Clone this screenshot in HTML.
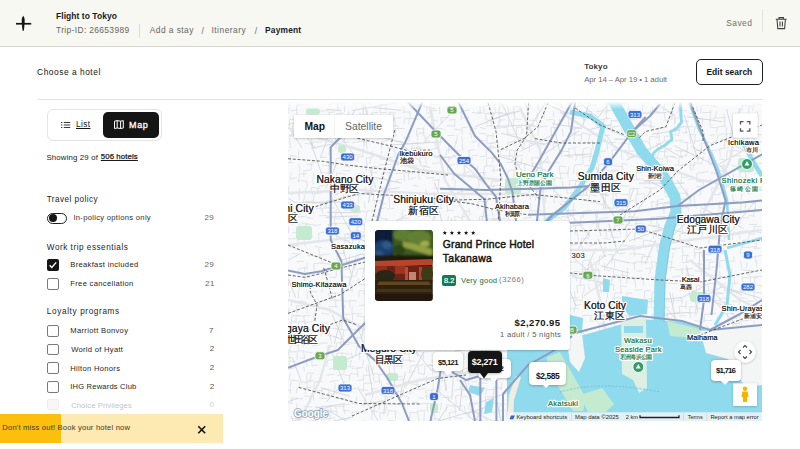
<!DOCTYPE html>
<html><head><meta charset="utf-8">
<style>
*{margin:0;padding:0;box-sizing:border-box}
html,body{width:800px;height:449px;overflow:hidden;background:#fff;font-family:"Liberation Sans",sans-serif;color:#111}
.t{position:absolute;white-space:nowrap;line-height:1}
.b{position:absolute}
</style></head><body>
<div class="b" style="left:0px;top:0px;width:800px;height:46px;background:#f8f8f3"></div>
<div class="b" style="left:0px;top:46px;width:800px;height:1px;background:#d6d6cf"></div>
<svg class="b" style="left:14px;top:14px" width="20" height="20" viewBox="14 14 20 20">
<rect x="16" y="22.9" width="15.2" height="1.7" fill="#151515"/>
<path d="M23.2 15.8 C24.7 17.4 24.9 20 24.6 23 L24.3 27 L23.8 30.8 L22.6 30.8 L22.1 27 L21.8 23 C21.5 20 21.7 17.4 23.2 15.8Z" fill="#151515"/>
</svg>
<div class="t" id="h1" style="left:56.05px;top:12.05px;font-size:8.5px;color:#1a1a1a;font-weight:bold;letter-spacing:0.038px">Flight to Tokyo</div>
<div class="t" id="h2" style="left:56.05px;top:25.58px;font-size:8.4px;color:#66665f;letter-spacing:0.365px">Trip-ID: 26653989</div>
<div class="b" style="left:139px;top:24px;width:1px;height:14px;background:#dcdcd5"></div>
<div class="t" id="h3" style="left:149.78px;top:26.00px;font-size:8.4px;color:#66665f;letter-spacing:0.450px">Add a stay</div>
<div class="t" id="h4" style="left:201.56px;top:26.56px;font-size:8.4px;color:#66665f">/</div>
<div class="t" id="h5" style="left:211.44px;top:26.00px;font-size:8.4px;color:#66665f;letter-spacing:0.508px">Itinerary</div>
<div class="t" id="h6" style="left:254.73px;top:26.56px;font-size:8.4px;color:#66665f">/</div>
<div class="t" id="h7" style="left:265.00px;top:26.00px;font-size:8.4px;color:#1a1a1a;font-weight:bold;letter-spacing:0.195px">Payment</div>
<div class="t" id="h8" style="left:726.27px;top:18.87px;font-size:8.4px;color:#6f6f68;letter-spacing:0.450px">Saved</div>
<div class="b" style="left:762px;top:9px;width:1px;height:23px;background:#e4e4dd"></div>
<svg class="b" style="left:774px;top:15px" width="15" height="16" viewBox="774 15 15 16">
<path d="M775.8 19.3H786.6M779 19V17.6H783.4V19M777 19.5L777.8 28.6H784.6L785.4 19.5M780 21.5V26.5M782.4 21.5V26.5" fill="none" stroke="#3d3d3d" stroke-width="1.05"/>
</svg>
<div class="t" id="s1" style="left:37.08px;top:68.42px;font-size:8.4px;color:#141414;letter-spacing:0.526px">Choose a hotel</div>
<div class="t" id="s2" style="left:584.22px;top:62.90px;font-size:8px;color:#141414;letter-spacing:0.562px;-webkit-text-stroke:0.2px #141414">Tokyo</div>
<div class="t" id="s3" style="left:584.22px;top:75.69px;font-size:7.8px;color:#6d6d6d;letter-spacing:-0.080px">Apr 14 – Apr 19 • 1 adult</div>
<div class="b" style="left:696px;top:59px;width:67px;height:26px;border:1px solid #1e1e1e;border-radius:5px"></div>
<div class="t" id="s4" style="left:706.44px;top:67.59px;font-size:8.4px;color:#141414;font-weight:bold;letter-spacing:0.063px">Edit search</div>
<div class="b" style="left:38px;top:99px;width:725px;height:1px;background:#e2e2e2"></div>
<div class="b" style="left:47px;top:109px;width:115px;height:32px;border:1px solid #e4e4e4;border-radius:6px"></div>
<div class="b" style="left:103px;top:112px;width:56px;height:26px;background:#151515;border-radius:5px"></div>
<svg class="b" style="left:60px;top:119px" width="12" height="10" viewBox="60 119 12 10">
<path d="M61 122.5h1.3M61 125h1.3M61 127.5h1.3M63.8 122.5h6.4M63.8 125h6.4M63.8 127.5h6.4" stroke="#151515" stroke-width="0.85" fill="none"/>
</svg>
<div class="t" id="l1" style="left:76.03px;top:120.36px;font-size:8.3px;color:#151515;letter-spacing:0.375px;text-decoration:underline;text-underline-offset:1px">List</div>
<svg class="b" style="left:113px;top:118px" width="13" height="12" viewBox="113 118 13 12">
<path d="M114.5 121.2L117.2 120.6L120.6 121.2L123.3 120.6V128L120.6 128.5L117.2 128L114.5 128.5Z M117.2 120.6V128 M120.6 121.2V128.5" stroke="#fff" stroke-width="1" fill="none" stroke-linejoin="round"/>
</svg>
<div class="t" id="l2" style="left:129.07px;top:121.20px;font-size:9px;color:#ffffff;letter-spacing:0.639px;-webkit-text-stroke:0.3px #fff">Map</div>
<div class="t" id="l3" style="left:46.47px;top:153.80px;font-size:7.8px;color:#1a1a1a;letter-spacing:0.165px">Showing 29 of</div>
<div class="t" id="l4" style="left:100.74px;top:152.99px;font-size:7.8px;color:#1a1a1a;letter-spacing:0.110px;text-decoration:underline;text-underline-offset:1px;-webkit-text-stroke:0.25px #1a1a1a">506 hotels</div>
<div class="t" id="f1" style="left:46.66px;top:195.95px;font-size:8.2px;color:#1e1e1e;letter-spacing:0.435px">Travel policy</div>
<div class="b" style="left:47px;top:212.5px;width:20px;height:11.0px;border:1px solid #1e1e1e;border-radius:6px"></div>
<div class="b" style="left:48.5px;top:214px;width:8.0px;height:8px;background:#151515;border-radius:50%"></div>
<div class="t" id="f2" style="left:73.39px;top:214.22px;font-size:7.7px;color:#333;letter-spacing:0.264px">In-policy options only</div>
<div class="t" id="f3" style="left:204.61px;top:214.29px;font-size:8px;color:#666;letter-spacing:0.090px">29</div>
<div class="t" id="f4" style="left:46.83px;top:243.68px;font-size:8.2px;color:#1e1e1e;letter-spacing:0.512px">Work trip essentials</div>
<div class="b" style="left:47px;top:259px;width:11.5px;height:12px;background:#151515;border-radius:2px"></div>
<svg class="b" style="left:47px;top:259px" width="12" height="12" viewBox="47 259 12 12">
<path d="M49.6 265.2L51.8 267.4L56.2 262.4" stroke="#fff" stroke-width="1.4" fill="none"/></svg>
<div class="t" id="f5" style="left:70.27px;top:261.23px;font-size:7.6px;color:#222;letter-spacing:0.318px">Breakfast included</div>
<div class="t" id="f6" style="left:204.61px;top:261.30px;font-size:8px;color:#666;letter-spacing:0.090px">29</div>
<div class="b" style="left:47px;top:278.3px;width:11.5px;height:11.699999999999989px;border:1px solid #7a7a7a;border-radius:2px"></div>
<div class="t" id="f7" style="left:70.27px;top:280.38px;font-size:7.6px;color:#222;letter-spacing:0.326px">Free cancellation</div>
<div class="t" id="f8" style="left:205.05px;top:280.30px;font-size:8px;color:#666;letter-spacing:0.450px">21</div>
<div class="t" id="f9" style="left:46.83px;top:308.16px;font-size:8.2px;color:#1e1e1e;letter-spacing:0.636px">Loyalty programs</div>
<div class="b" style="left:47px;top:325.1px;width:11.5px;height:11.800000000000011px;border:1px solid #7a7a7a;border-radius:2px"></div>
<div class="t" id="ly7Mar" style="left:70.27px;top:327.10px;font-size:7.6px;color:#1e1e1e;letter-spacing:0.321px">Marriott Bonvoy</div>
<div class="t" id="lnMar" style="left:208.88px;top:327.11px;font-size:8px;color:#555">7</div>
<div class="b" style="left:47px;top:343.6px;width:11.5px;height:11.800000000000011px;border:1px solid #7a7a7a;border-radius:2px"></div>
<div class="t" id="ly2Wor" style="left:71.17px;top:345.57px;font-size:7.6px;color:#1e1e1e;letter-spacing:0.295px">World of Hyatt</div>
<div class="t" id="lnWor" style="left:209.78px;top:345.32px;font-size:8px;color:#555">2</div>
<div class="b" style="left:47px;top:362.3px;width:11.5px;height:11.800000000000011px;border:1px solid #7a7a7a;border-radius:2px"></div>
<div class="t" id="ly2Hil" style="left:70.27px;top:364.58px;font-size:7.6px;color:#1e1e1e;letter-spacing:0.309px">Hilton Honors</div>
<div class="t" id="lnHil" style="left:209.78px;top:364.33px;font-size:8px;color:#555">2</div>
<div class="b" style="left:47px;top:380.90000000000003px;width:11.5px;height:11.800000000000011px;border:1px solid #7a7a7a;border-radius:2px"></div>
<div class="t" id="ly2IHG" style="left:70.27px;top:383.32px;font-size:7.6px;color:#1e1e1e;letter-spacing:0.180px">IHG Rewards Club</div>
<div class="t" id="lnIHG" style="left:209.78px;top:382.99px;font-size:8px;color:#555">2</div>
<div class="b" style="left:47px;top:398.8px;width:11.5px;height:11.699999999999989px;border:1px solid #eee;border-radius:2px;background:#f7f7f7"></div>
<div class="t" id="fa" style="left:71.17px;top:401.86px;font-size:7.6px;color:#c4c4c4;letter-spacing:0.119px">Choice Privileges</div>
<div class="t" id="fb" style="left:209.50px;top:401.09px;font-size:8px;color:#d0d0d0">0</div>
<div class="b" style="left:0px;top:413.5px;width:223px;height:29.80000000000001px;background:#fde9b2"></div>
<div class="b" style="left:0px;top:413.5px;width:60.8px;height:29.80000000000001px;background:#fcbf0e"></div>
<div class="t" id="bn" style="left:2.30px;top:424.41px;font-size:7.6px;color:#3d3628;letter-spacing:0.200px">Don't miss out! Book your hotel now</div>
<svg class="b" style="left:196px;top:424px" width="12" height="12" viewBox="196 424 12 12">
<path d="M198.3 426.3L205.2 433.2M205.2 426.3L198.3 433.2" stroke="#111" stroke-width="1.6"/></svg>
<svg class="b" style="left:288px;top:102px" width="474" height="319" viewBox="288 102 474 319">
<rect x="288" y="102" width="474" height="319" fill="#f8f9fa"/>
<path d="M282.8 97.2l0.0 7.8M296.4 96.2l8.7 0.6M296.4 96.2l1.4 9.4M306.1 97.5l5.6 0.1M306.1 97.5l-0.9 6.5M311.1 96.9l8.9 0.1M320.5 97.6l6.6 1.5M329.4 97.8l6.4 -0.6M329.4 97.8l0.8 7.1M341.0 95.8l1.4 7.1M348.8 97.5l-1.2 6.8M359.9 98.0l6.5 -1.2M359.9 98.0l0.9 6.2M365.7 96.8l8.4 -1.1M371.5 96.7l6.6 1.4M379.7 98.5l7.1 1.1M386.4 99.0l6.5 0.8M386.4 99.0l-0.6 5.8M393.9 97.3l7.9 -0.4M393.9 97.3l1.4 7.4M403.3 98.5l6.1 1.2M425.2 95.4l9.4 -0.8M432.0 98.3l-1.0 8.4M448.5 96.1l-1.5 6.6M455.3 95.2l7.0 0.2M455.3 95.2l-0.4 9.1M469.1 95.1l9.1 0.6M476.1 97.5l8.4 -0.5M537.8 98.4l8.5 -1.4M545.4 95.9l0.3 9.2M552.0 95.0l8.2 -0.9M552.0 95.0l1.2 8.1M560.3 98.6l8.2 -0.9M560.3 98.6l0.9 9.2M569.5 96.5l-1.1 7.5M582.1 95.7l6.6 -0.9M582.1 95.7l0.4 7.5M589.8 98.4l-1.3 5.6M604.7 98.2l6.0 -0.1M604.7 98.2l1.0 6.4M611.6 95.2l0.4 8.1M621.7 98.8l-0.1 6.2M626.0 96.9l-0.7 6.9M642.6 98.2l1.3 8.4M667.3 96.9l0.7 8.8M673.6 97.9l9.1 1.4M680.6 98.2l9.1 1.1M680.6 98.2l-1.3 7.3M688.2 98.1l5.6 0.9M688.2 98.1l0.9 6.2M694.8 98.2l6.1 0.0M704.4 97.8l1.3 5.8M709.4 97.1l8.4 0.4M719.4 97.2l7.0 1.0M733.3 95.8l7.5 0.3M733.3 95.8l1.4 7.6M740.1 98.2l0.6 5.8M754.6 96.9l7.2 0.9M282.9 103.8l8.0 1.3M282.9 103.8l0.8 5.6M289.3 103.4l-0.4 8.0M296.4 105.4l7.5 -0.7M296.4 105.4l0.1 7.2M305.0 104.2l6.1 -0.9M329.6 103.8l9.2 -0.8M337.1 103.0l8.4 -0.7M337.1 103.0l1.0 7.2M344.2 103.0l8.2 -1.4M344.2 103.0l0.5 9.1M352.4 103.0l8.5 0.0M356.8 102.8l5.6 0.2M365.8 103.1l6.3 1.0M374.7 102.9l9.3 -0.1M379.8 104.4l7.2 0.3M379.8 104.4l0.6 8.9M386.7 104.3l-0.9 6.2M403.8 105.9l0.3 7.5M412.4 105.7l9.1 0.7M426.3 105.6l0.7 5.8M432.4 104.4l6.9 0.4M439.4 106.3l0.5 7.8M456.3 105.5l0.3 8.5M462.0 104.1l6.3 -0.4M462.0 104.1l-0.7 9.1M480.0 105.1l0.3 8.5M483.7 106.2l7.4 -1.0M483.7 106.2l0.3 5.7M494.8 104.2l7.9 -0.4M494.8 104.2l0.5 7.7M499.6 105.4l5.6 -0.8M499.6 105.4l-1.0 8.5M507.6 106.1l1.5 9.3M513.8 106.1l7.4 1.4M513.8 106.1l0.1 9.2M530.9 103.0l-0.9 5.7M538.1 103.0l8.2 -0.1M538.1 103.0l0.2 7.2M553.9 103.5l9.1 0.9M568.4 105.0l-0.8 9.4M577.2 106.0l5.7 -0.7M577.2 106.0l0.4 5.9M583.2 102.8l8.2 0.2M590.0 104.4l6.9 0.7M606.6 103.4l6.5 0.9M606.6 103.4l0.5 9.5M620.2 104.0l9.0 -1.3M620.2 104.0l0.2 7.4M628.7 103.7l-0.9 8.1M642.1 103.1l8.4 -0.4M642.1 103.1l0.6 7.8M652.2 106.3l0.9 6.7M664.5 103.9l7.0 -0.3M664.5 103.9l-0.9 7.8M679.2 105.5l-1.4 7.6M696.7 102.8l8.7 -1.2M696.7 102.8l0.7 9.1M701.3 105.0l8.5 0.4M701.3 105.0l-0.8 8.6M710.6 105.6l6.9 1.4M742.3 105.1l8.3 0.9M742.3 105.1l-0.2 6.1M749.0 106.5l6.2 -0.9M749.0 106.5l-0.6 9.4M753.7 103.7l8.1 0.8M753.7 103.7l-1.3 7.3M283.3 113.6l5.9 -0.9M283.3 113.6l-0.8 8.4M290.9 110.9l6.6 -1.0M297.2 112.2l-0.7 9.0M307.2 111.4l9.3 -0.1M307.2 111.4l-1.4 9.3M314.2 111.5l7.6 -0.7M321.1 111.0l7.4 -0.4M328.9 112.4l6.1 -0.5M328.9 112.4l1.1 7.6M336.0 114.0l7.6 -1.0M348.8 111.1l-0.1 7.4M359.8 112.3l0.9 7.2M367.2 110.4l0.1 7.6M371.6 113.3l6.7 -1.3M371.6 113.3l-0.1 8.4M379.9 112.7l7.1 -0.1M389.3 112.6l7.0 0.6M389.3 112.6l0.2 7.3M393.5 114.0l0.3 6.7M402.5 112.2l6.8 -0.3M409.5 110.8l1.3 7.8M418.9 111.3l-1.1 5.9M426.2 112.8l7.1 1.0M431.4 110.9l6.0 -0.3M431.4 110.9l1.3 7.2M447.5 111.3l5.6 -0.3M461.1 111.3l8.1 -1.2M461.1 111.3l0.0 8.7M471.8 112.4l8.6 1.2M477.4 112.0l8.4 1.5M486.4 113.3l9.3 0.4M486.4 113.3l-1.3 6.5M493.3 112.8l9.2 -0.4M493.3 112.8l-1.1 9.4M499.0 113.6l7.7 0.2M499.0 113.6l1.2 9.5M509.3 112.4l8.8 -0.6M514.5 112.3l0.1 5.8M537.5 112.4l-0.9 7.4M544.1 111.5l0.1 6.6M553.3 111.3l0.5 6.1M562.3 112.4l7.1 0.4M569.0 113.0l9.5 1.0M583.1 112.1l9.1 -0.5M583.1 112.1l0.7 9.1M591.4 112.4l0.3 5.8M596.5 111.8l7.1 -1.3M605.6 111.0l7.1 -0.8M605.6 111.0l1.2 9.4M613.7 113.5l8.7 -0.8M620.8 113.6l8.7 -1.1M629.8 110.0l6.7 -0.5M629.8 110.0l1.2 8.8M635.1 111.4l-1.4 9.1M650.4 110.8l9.2 1.2M650.4 110.8l1.0 6.9M664.3 112.5l9.0 -1.3M664.3 112.5l0.7 6.8M674.6 113.5l0.6 9.3M680.3 110.3l6.7 0.6M680.3 110.3l-1.0 6.4M688.7 113.2l8.1 1.2M702.1 112.6l9.4 -0.2M710.6 110.2l-0.7 8.7M716.3 111.1l-0.7 7.7M724.2 113.6l-0.1 8.5M732.5 113.7l6.2 0.2M757.3 110.7l0.3 6.4M289.4 119.5l7.8 -0.0M289.4 119.5l0.3 8.4M298.3 121.0l6.1 -1.4M298.3 121.0l-0.2 7.3M304.6 120.7l9.1 0.2M314.2 118.5l6.7 -1.4M314.2 118.5l0.4 7.6M319.6 119.9l8.8 -1.0M319.6 119.9l-1.0 8.3M329.3 120.6l7.1 -0.4M329.3 120.6l1.4 5.7M335.5 120.5l-0.1 8.5M341.2 118.5l-0.3 6.7M350.2 117.8l9.5 0.8M356.9 118.5l-0.1 9.2M371.2 119.1l-0.5 8.3M382.0 119.9l-0.3 8.9M387.5 120.6l6.9 -0.9M394.2 118.3l7.4 -0.6M394.2 118.3l1.5 8.2M404.5 118.3l5.8 0.6M404.5 118.3l-0.7 5.6M409.2 118.5l9.2 0.6M409.2 118.5l-0.4 6.1M427.1 117.6l7.0 -1.3M432.3 120.6l5.7 -0.3M432.3 120.6l-1.4 6.1M440.9 117.6l7.2 0.1M440.9 117.6l0.6 6.5M448.9 120.2l6.3 -0.7M455.1 119.0l-0.6 6.9M461.9 117.7l8.0 0.2M487.0 118.4l-0.2 7.1M491.2 119.0l7.5 -0.7M491.2 119.0l-0.3 7.4M499.2 120.2l5.9 -0.5M499.2 120.2l-1.0 7.8M508.8 119.7l-0.3 7.0M513.8 119.1l7.5 0.3M513.8 119.1l-0.5 6.5M529.5 120.2l7.4 0.3M546.0 120.0l7.2 -0.7M554.5 119.0l-1.1 7.5M559.7 118.9l-0.9 6.4M568.7 118.4l7.7 -0.3M568.7 118.4l-0.0 8.1M584.9 118.8l9.0 -0.6M596.6 120.0l7.8 -0.4M596.6 120.0l0.7 7.6M604.4 118.5l6.2 0.0M604.4 118.5l-1.3 5.8M611.4 120.3l7.3 0.8M611.4 120.3l-1.0 9.0M622.0 117.7l7.5 0.9M622.0 117.7l0.6 6.5M628.9 118.8l8.5 1.0M644.3 120.7l7.0 0.5M644.3 120.7l-0.9 5.6M650.8 121.3l0.6 7.2M663.7 120.4l5.7 -0.6M675.0 118.0l5.6 0.1M675.0 118.0l-0.4 6.7M681.7 120.9l7.1 0.4M696.7 118.1l5.9 1.3M696.7 118.1l-0.0 6.0M702.3 117.6l0.4 6.6M709.4 119.4l6.5 -1.3M709.4 119.4l1.2 6.7M716.3 118.2l9.5 -0.9M725.4 119.2l-1.3 7.7M733.6 120.0l9.3 1.1M740.3 120.8l-1.4 6.2M746.5 117.8l8.5 -0.6M753.5 118.3l0.1 8.7M284.2 127.9l8.7 1.0M292.4 125.4l0.6 6.5M299.6 125.1l-0.3 7.0M306.1 128.2l8.1 -0.4M306.1 128.2l1.2 6.8M311.4 126.3l0.7 7.7M321.2 125.7l6.1 -0.4M321.2 125.7l-1.5 7.5M327.6 126.3l9.3 -0.9M334.8 128.0l9.5 -0.2M341.9 126.6l-0.7 8.2M352.3 126.3l6.9 1.5M352.3 126.3l0.4 7.0M366.9 127.5l7.8 -1.2M373.8 126.8l-0.3 6.4M380.9 127.3l5.6 0.4M380.9 127.3l0.3 7.9M389.7 125.6l9.5 0.7M389.7 125.6l0.7 9.5M395.1 128.5l9.5 -0.0M395.1 128.5l1.0 8.1M417.0 128.2l7.6 1.1M417.0 128.2l-0.7 8.1M423.8 127.2l-0.8 8.7M434.4 128.1l9.1 0.9M434.4 128.1l-0.4 5.9M446.5 125.7l8.9 0.4M453.8 129.0l8.0 1.1M461.8 127.7l5.6 -0.5M461.8 127.7l0.4 6.6M470.9 127.8l6.0 0.6M470.9 127.8l-1.1 6.0M479.8 127.4l6.3 1.5M486.4 126.4l7.1 -1.1M492.7 128.3l7.3 0.0M499.9 127.8l7.8 -0.6M507.1 128.4l1.3 7.1M516.5 127.4l5.8 -0.2M516.5 127.4l-0.2 9.3M522.2 127.8l-0.3 6.0M532.1 126.0l6.9 1.0M538.4 127.2l9.1 -1.2M538.4 127.2l-0.4 8.4M551.1 127.5l6.9 -0.1M551.1 127.5l0.5 7.9M562.4 128.9l1.0 8.1M568.8 129.0l7.3 -0.3M574.4 129.0l7.0 -1.1M574.4 129.0l0.7 5.8M596.5 126.9l8.9 1.3M603.6 126.4l7.6 -1.2M612.2 127.0l7.8 -1.1M612.2 127.0l0.0 6.7M621.6 126.0l5.7 -0.8M621.6 126.0l0.2 7.3M629.4 125.4l1.4 7.6M642.7 125.0l8.8 0.7M649.1 127.1l5.9 -0.6M658.6 128.4l7.2 -1.3M658.6 128.4l-1.2 9.2M674.8 127.3l9.1 -0.3M674.8 127.3l0.7 6.5M680.0 126.7l6.9 -0.2M680.0 126.7l-1.4 8.8M686.2 127.1l7.1 -0.8M686.2 127.1l-0.4 6.8M695.4 125.9l-1.5 7.1M710.0 127.4l6.7 0.3M717.3 127.0l8.5 -1.3M717.3 127.0l-0.7 6.6M726.7 126.7l-0.6 8.2M731.3 128.9l-0.5 8.8M741.7 127.6l8.6 -1.4M748.2 128.7l1.3 8.5M755.8 125.0l0.5 9.4M284.7 132.8l0.8 7.0M290.3 134.2l6.8 0.7M290.3 134.2l-1.2 8.8M298.7 134.7l6.0 -0.6M305.7 136.2l7.2 0.1M311.5 136.0l5.6 -0.2M311.5 136.0l0.5 9.2M320.5 135.3l8.6 -1.2M326.7 134.8l6.9 -1.0M326.7 134.8l0.3 7.6M335.1 134.8l0.3 7.4M344.9 133.8l-0.7 8.4M350.8 133.5l8.8 -0.4M367.1 134.3l6.4 0.8M367.1 134.3l-0.6 8.9M389.2 132.9l-0.9 7.6M404.6 136.2l1.4 8.4M409.7 135.9l-0.8 5.6M418.1 133.5l6.5 -1.1M418.1 133.5l-0.7 6.6M424.6 134.5l1.1 8.9M441.1 136.2l-1.3 9.2M447.5 135.6l7.3 -0.4M457.3 134.5l-0.8 9.3M461.4 136.3l1.2 5.9M470.8 133.0l1.1 5.7M478.7 132.8l7.8 1.4M486.9 135.6l5.8 0.1M486.9 135.6l0.1 6.9M493.0 133.3l-0.0 5.8M506.5 133.7l8.3 1.3M531.0 135.0l0.1 9.3M569.3 134.1l6.9 -1.5M574.5 134.8l6.8 0.5M574.5 134.8l-0.8 9.0M581.7 133.1l7.4 0.9M581.7 133.1l-0.8 8.1M589.5 134.6l9.0 -0.9M589.5 134.6l-0.6 6.8M603.8 135.6l6.4 -0.3M627.4 135.7l6.6 0.3M635.4 135.8l7.5 -0.4M635.4 135.8l1.2 6.1M649.9 136.2l8.4 1.3M649.9 136.2l-1.1 8.2M659.5 135.4l-0.4 6.0M664.6 136.3l6.2 -0.5M664.6 136.3l-0.6 6.2M671.5 134.6l7.8 0.8M682.3 132.8l5.8 -0.6M689.7 134.5l6.8 0.2M689.7 134.5l0.9 9.4M695.3 134.9l-0.9 9.3M704.9 132.6l-1.3 6.2M709.2 135.4l5.6 -0.8M718.0 135.1l6.2 -1.5M718.0 135.1l-1.4 6.5M726.0 134.0l8.0 -0.5M726.0 134.0l1.2 7.8M732.7 134.7l6.8 1.2M732.7 134.7l1.3 8.9M742.0 133.2l9.4 -0.6M742.0 133.2l0.7 6.4M748.3 133.1l-1.2 8.2M754.9 134.7l9.2 0.0M754.9 134.7l-1.5 7.5M282.1 142.3l-1.2 7.5M290.4 142.6l-0.2 5.8M304.5 143.6l7.2 0.2M313.0 141.9l8.9 0.0M313.0 141.9l-0.9 6.4M336.7 140.7l-0.8 9.2M341.1 142.0l8.7 0.3M352.2 142.6l8.2 -1.2M359.5 141.2l8.3 0.8M366.0 140.5l1.1 8.6M381.1 142.0l6.9 -1.4M381.1 142.0l0.9 6.4M394.8 141.1l8.1 0.6M402.3 143.7l1.4 8.0M412.4 143.1l6.6 0.1M412.4 143.1l-1.4 9.0M418.1 141.9l-0.9 7.8M424.5 141.3l5.7 -0.4M434.8 142.6l7.1 -0.8M434.8 142.6l1.4 6.0M448.6 143.8l0.1 9.5M455.6 140.8l-1.0 7.7M462.1 142.9l0.8 8.1M471.3 141.8l5.9 -0.1M479.6 140.2l6.6 0.6M479.6 140.2l-1.1 7.2M485.8 143.0l8.1 0.5M491.2 142.8l5.7 -0.1M491.2 142.8l-1.3 7.1M507.9 142.4l9.4 -1.1M507.9 142.4l-0.8 9.0M515.5 141.6l9.0 -0.7M523.8 141.8l7.2 -0.1M523.8 141.8l0.4 7.1M529.7 143.1l7.4 1.1M529.7 143.1l-0.4 9.1M539.9 143.1l8.2 0.7M539.9 143.1l0.7 9.3M546.1 142.7l8.1 -0.8M553.2 143.9l8.3 -1.4M553.2 143.9l0.8 6.5M561.0 140.9l9.5 -0.9M584.0 142.3l8.3 0.2M592.4 140.5l0.7 9.3M597.1 142.3l7.5 -1.0M607.1 142.7l8.7 -0.2M607.1 142.7l0.3 7.3M619.9 143.0l6.7 0.6M629.3 141.5l6.9 0.1M629.3 141.5l-0.4 8.1M642.0 140.7l5.8 0.9M649.6 142.0l1.0 8.9M656.8 142.8l1.1 6.4M665.4 141.3l8.7 0.2M674.9 140.9l8.0 -1.0M679.9 141.8l8.8 1.2M686.7 141.4l1.1 9.0M694.4 141.5l8.4 -1.4M701.3 143.4l7.8 -1.2M701.3 143.4l-0.4 9.4M710.9 143.4l5.9 -1.4M724.8 141.9l7.7 -0.4M724.8 141.9l-0.8 6.7M732.0 140.1l7.9 -0.7M732.0 140.1l1.0 7.4M755.2 141.6l7.4 0.1M284.2 151.1l5.6 -0.6M284.2 151.1l0.9 8.0M298.7 150.3l-0.3 7.7M330.0 147.8l-1.1 7.1M356.9 149.3l6.8 0.2M363.6 148.4l-1.3 8.5M372.3 151.3l0.4 6.5M381.8 150.4l-1.4 8.7M386.6 148.3l6.2 -0.1M394.8 148.5l0.4 8.0M404.7 147.7l1.0 6.5M411.4 148.2l9.4 -0.8M411.4 148.2l1.3 8.2M416.3 148.2l6.7 1.0M427.4 150.2l0.7 7.5M431.2 149.5l7.6 -1.4M431.2 149.5l1.4 7.0M446.7 149.5l8.6 0.2M446.7 149.5l-0.9 8.4M453.8 151.0l6.3 -0.1M468.7 150.8l6.1 -1.4M468.7 150.8l1.1 7.0M487.2 147.6l6.6 -0.9M487.2 147.6l-0.9 8.1M491.7 148.2l7.0 -1.1M500.5 149.1l5.7 0.3M500.5 149.1l-0.5 5.5M509.6 149.9l7.7 1.3M509.6 149.9l-0.3 8.3M515.0 150.3l-0.6 6.7M561.1 151.3l7.1 0.2M561.1 151.3l0.8 5.7M568.5 148.6l7.9 -0.9M568.5 148.6l1.1 9.4M574.6 149.0l1.0 6.3M583.2 148.9l5.5 -1.5M583.2 148.9l-0.7 9.5M591.1 147.8l-0.1 8.4M599.4 151.2l6.8 -0.3M599.4 151.2l0.7 7.4M611.8 150.0l5.6 -0.3M611.8 150.0l0.7 7.8M621.2 151.4l5.9 -1.4M621.2 151.4l1.0 8.2M628.2 150.9l6.0 0.4M628.2 150.9l-0.8 5.6M634.1 147.8l6.0 0.3M658.7 151.4l8.6 0.4M658.7 151.4l-1.5 7.4M664.6 149.9l7.5 -1.3M664.6 149.9l0.3 8.2M675.0 150.7l7.3 0.0M680.1 151.2l7.1 -0.1M680.1 151.2l1.5 5.7M687.6 147.8l-1.1 7.2M695.9 150.6l6.7 -0.4M701.9 147.5l-1.1 6.0M712.1 150.5l8.2 -0.9M712.1 150.5l0.3 5.7M719.7 148.8l8.6 -1.2M719.7 148.8l0.5 7.4M727.1 150.7l5.7 0.3M727.1 150.7l-0.6 9.2M731.8 150.1l9.2 1.3M746.2 149.5l7.7 1.4M754.5 149.7l6.2 0.7M290.4 155.5l6.2 1.0M290.4 155.5l0.4 7.0M320.1 157.6l7.1 -0.4M336.2 158.4l8.1 -0.7M336.2 158.4l-1.2 8.7M344.7 156.2l6.0 -1.1M352.1 155.3l8.5 -0.8M357.4 156.9l6.7 -0.2M357.4 156.9l0.7 5.6M366.1 158.2l6.3 -1.1M366.1 158.2l0.9 7.9M371.1 156.8l-1.4 7.2M379.9 158.9l9.2 1.1M386.5 158.2l7.7 -1.2M386.5 158.2l-0.3 6.1M404.0 157.6l8.6 0.5M404.0 157.6l0.1 7.2M419.2 158.3l6.1 -1.4M419.2 158.3l1.4 6.7M425.3 156.9l0.8 6.8M434.4 158.2l7.7 -1.2M448.7 156.7l6.3 -0.1M448.7 156.7l0.5 5.9M454.1 155.8l7.8 -1.5M464.3 156.5l8.8 1.4M464.3 156.5l0.8 8.8M472.2 155.8l6.2 -0.8M479.6 156.9l6.9 -0.8M486.4 158.1l7.3 -0.1M486.4 158.1l-0.1 8.2M493.8 156.3l-1.4 7.0M499.9 155.1l7.2 1.3M506.1 156.3l6.7 -1.1M516.9 156.5l5.9 -1.5M521.9 157.9l-0.9 6.8M531.6 157.9l7.3 -0.4M531.6 157.9l0.9 6.5M547.3 155.7l0.9 6.0M566.2 156.1l7.2 1.3M576.8 155.3l8.4 -0.5M576.8 155.3l-1.3 5.7M582.6 157.2l7.8 -0.6M582.6 157.2l0.5 6.8M590.5 156.5l5.7 -0.6M590.5 156.5l-1.2 5.6M597.9 155.1l-0.2 7.6M628.7 156.8l7.8 0.1M643.4 158.6l7.4 -0.4M649.2 157.3l8.5 -0.0M657.2 158.5l6.4 0.7M666.6 156.1l8.3 0.7M666.6 156.1l1.3 7.6M671.1 156.9l5.9 1.2M679.0 156.8l8.2 -1.2M679.0 156.8l-0.3 7.4M697.1 158.3l6.5 -0.1M703.4 156.4l-1.4 5.9M709.3 157.9l-0.8 6.5M719.1 158.6l5.9 1.4M733.0 156.1l8.1 -0.5M739.1 158.9l6.4 1.4M284.4 162.7l8.4 -0.0M298.8 164.0l1.2 8.4M306.7 164.3l7.3 0.5M311.4 162.5l6.5 -0.8M311.4 162.5l-0.3 8.3M322.2 165.2l9.0 0.3M328.5 163.9l5.8 0.5M328.5 163.9l0.5 9.1M344.3 166.5l5.6 0.3M352.0 164.9l5.5 1.0M367.5 164.3l-1.5 6.8M372.4 166.5l6.6 0.6M372.4 166.5l-0.6 7.1M379.0 164.9l8.7 -0.5M386.8 164.6l5.6 -0.6M394.7 164.5l6.6 0.1M394.7 164.5l-0.5 6.6M412.0 165.5l6.0 0.7M420.0 165.6l7.8 0.4M424.0 166.4l6.6 1.4M424.0 166.4l-1.3 8.2M432.0 163.4l7.9 -0.5M447.0 165.8l7.8 -1.3M447.0 165.8l1.3 6.0M456.4 164.6l8.7 -1.3M464.3 164.5l5.6 0.6M464.3 164.5l0.1 9.2M477.3 165.6l0.1 6.6M484.6 166.1l8.6 -0.4M484.6 166.1l-1.5 9.4M494.0 166.4l-1.0 5.7M500.9 165.0l-0.8 6.4M506.6 162.6l7.2 -0.4M514.8 165.8l5.9 -1.4M524.5 162.7l0.6 8.8M531.4 163.5l9.4 1.2M538.2 162.7l9.1 -1.3M538.2 162.7l-1.4 9.0M544.9 162.8l6.3 -0.2M553.6 162.9l5.7 -0.2M559.5 165.8l7.1 0.9M559.5 165.8l0.2 7.6M568.9 166.3l-0.9 7.4M574.6 164.7l8.3 -0.3M574.6 164.7l-1.1 9.2M584.4 166.0l9.4 -1.0M592.3 163.3l6.0 -1.2M598.4 164.4l8.1 -1.1M598.4 164.4l0.3 8.1M606.7 165.8l6.7 -1.1M606.7 165.8l-1.4 9.0M613.7 165.7l9.1 1.0M621.7 163.4l5.7 0.8M621.7 163.4l1.5 6.7M637.0 166.2l8.0 -1.3M644.8 164.5l7.8 -1.3M644.8 164.5l-1.3 7.2M651.8 165.5l-0.2 5.7M659.2 164.8l6.1 -0.1M659.2 164.8l-1.1 5.8M674.5 164.7l6.6 1.0M681.1 165.0l6.3 -0.2M689.8 164.9l5.7 0.2M689.8 164.9l1.3 6.3M694.3 162.6l8.7 1.1M694.3 162.6l-1.5 7.8M709.6 164.9l8.5 -0.7M718.7 166.1l9.3 0.2M718.7 166.1l0.4 6.7M724.0 162.7l-1.2 8.6M731.6 165.5l7.0 1.3M748.5 164.8l7.0 0.2M748.5 164.8l0.4 9.0M756.4 163.4l7.0 -0.2M291.2 172.2l-1.1 7.3M299.5 173.8l7.8 0.1M299.5 173.8l-1.0 8.7M303.8 170.9l6.3 -0.9M303.8 170.9l0.1 6.2M313.6 172.4l0.3 6.7M320.4 172.8l8.4 0.3M328.5 172.2l-0.4 7.2M336.4 172.9l9.3 1.4M336.4 172.9l1.5 8.0M342.5 170.3l7.9 0.7M363.9 172.7l1.4 7.4M371.7 172.0l6.2 1.2M371.7 172.0l0.6 6.2M380.6 174.0l8.9 -1.5M389.6 171.8l-1.0 6.9M395.3 173.5l7.7 -0.1M404.2 172.4l9.3 0.3M404.2 172.4l0.1 9.0M408.7 172.6l6.7 -1.0M408.7 172.6l-0.2 7.2M418.4 171.1l0.9 8.7M424.4 173.9l6.8 -0.7M432.7 172.7l8.9 -0.7M453.9 174.0l5.7 1.0M453.9 174.0l-1.4 6.2M463.0 173.4l6.2 -1.5M463.0 173.4l-0.6 7.5M479.6 172.7l7.0 -0.1M479.6 172.7l1.3 7.4M484.3 172.0l0.3 5.9M492.0 170.7l8.3 -0.8M500.8 173.0l1.5 7.3M508.0 170.7l8.1 -1.2M508.0 170.7l-1.2 7.7M514.3 171.1l-1.1 8.2M525.0 172.5l7.7 0.6M531.6 171.0l-1.1 7.5M536.7 172.2l9.3 -0.2M547.3 171.8l-0.3 6.0M553.6 173.7l0.1 6.9M560.1 173.1l7.4 0.0M560.1 173.1l0.7 6.5M567.6 171.0l0.6 7.2M576.6 172.2l7.5 -0.7M576.6 172.2l1.3 7.4M584.0 170.6l-0.8 6.0M588.6 173.6l-1.5 8.4M598.7 170.2l-0.8 8.6M606.6 170.9l8.7 0.3M611.7 170.3l7.6 0.3M611.7 170.3l0.4 7.8M636.3 172.2l5.9 0.5M636.3 172.2l0.3 7.7M643.4 171.7l6.7 0.6M649.8 171.3l7.2 0.4M665.3 171.8l1.0 7.2M673.2 172.1l5.5 -0.7M673.2 172.1l1.4 6.0M682.1 173.9l-1.4 9.0M696.8 173.3l7.5 -1.2M696.8 173.3l-0.0 8.8M702.2 172.7l6.5 -1.3M710.8 172.9l9.2 0.7M719.5 170.7l7.7 0.3M726.2 170.2l-0.9 8.5M733.5 173.4l-0.1 7.4M739.9 172.3l6.5 -1.1M739.9 172.3l0.1 8.5M754.6 173.6l8.9 -0.8M283.7 178.2l-0.3 7.0M289.8 178.9l7.1 -1.2M297.4 180.3l9.4 1.1M306.9 181.2l0.3 5.8M312.5 178.8l0.8 5.8M326.6 180.2l8.0 -0.3M335.3 178.6l9.3 -0.5M335.3 178.6l0.1 8.2M344.8 177.8l8.4 -0.0M351.2 177.9l6.2 -0.6M351.2 177.9l-0.6 6.0M356.1 179.6l-1.2 8.4M363.8 178.1l6.7 0.9M373.1 179.0l8.8 -0.3M378.9 179.2l6.1 -1.3M389.8 181.5l8.4 0.3M389.8 181.5l-1.0 8.1M395.3 180.2l6.7 -1.2M409.7 179.1l5.7 -1.4M426.2 177.9l7.9 -0.3M432.4 180.1l7.5 -0.2M438.7 178.5l-0.1 9.5M455.1 179.1l-0.1 6.6M478.5 179.5l7.1 -1.0M478.5 179.5l0.9 7.6M491.7 181.3l7.5 -0.1M491.7 181.3l-0.7 6.2M507.0 181.3l7.3 1.3M515.4 180.5l-1.3 8.4M524.0 179.9l8.5 -1.0M531.0 180.0l7.0 0.7M531.0 180.0l-1.4 7.2M539.4 180.0l5.8 1.0M546.3 178.3l-1.0 6.8M554.8 177.6l8.4 0.8M554.8 177.6l-1.3 8.9M562.4 181.1l0.7 8.1M569.3 180.5l9.4 -0.1M569.3 180.5l0.4 8.7M575.9 181.3l9.1 1.1M575.9 181.3l-1.4 7.9M591.5 178.2l-0.9 6.6M597.5 180.4l-1.3 8.6M606.5 180.8l-0.7 7.4M612.2 180.8l5.6 -0.1M612.2 180.8l-1.4 7.9M620.9 179.7l7.7 0.1M620.9 179.7l-0.8 6.1M634.6 179.9l8.5 -0.9M643.9 180.7l9.1 1.5M649.9 178.6l-1.0 5.9M665.6 178.9l5.7 -1.2M672.2 177.5l0.8 7.3M682.4 177.8l8.1 -1.4M687.4 180.2l5.8 -1.2M697.3 181.2l5.9 0.8M704.1 180.0l-1.1 5.8M710.2 178.7l0.8 6.0M716.4 181.2l7.9 0.3M716.4 181.2l-0.5 6.1M731.3 179.2l9.2 0.4M731.3 179.2l-0.1 5.6M740.6 177.8l7.5 0.1M740.6 177.8l0.3 6.7M748.8 177.7l-1.0 6.7M756.0 177.9l-0.3 5.8M282.8 188.8l6.2 0.1M289.1 185.9l-1.4 8.3M299.5 188.2l-0.6 7.9M306.0 187.5l-0.8 5.8M311.2 187.3l9.0 1.4M311.2 187.3l1.4 8.0M318.5 186.5l6.7 -1.3M318.5 186.5l-1.4 7.3M335.5 188.2l8.5 0.8M335.5 188.2l0.7 6.9M341.7 186.7l8.4 -0.7M341.7 186.7l0.9 7.9M365.7 187.1l-0.9 7.5M372.2 187.9l-0.9 8.0M380.1 187.7l5.9 0.6M412.5 185.3l6.4 1.0M425.8 188.6l1.4 6.7M433.5 188.0l6.7 1.2M449.8 187.9l5.9 -1.0M449.8 187.9l0.2 6.8M461.5 187.1l0.1 8.7M477.4 187.0l-1.3 8.1M487.3 185.6l7.3 0.9M493.6 185.2l7.8 0.7M493.6 185.2l-1.2 6.8M500.2 186.3l5.8 0.4M508.5 188.7l8.0 -0.4M521.5 186.8l7.7 -0.8M529.9 185.0l-0.7 7.6M536.2 188.1l0.4 6.0M545.6 185.4l7.3 0.1M554.7 186.3l6.3 0.7M554.7 186.3l-0.9 6.3M560.2 188.3l8.8 -0.1M567.0 186.6l-0.1 6.5M574.7 186.4l7.8 -1.4M574.7 186.4l-0.7 6.2M584.3 187.7l-0.9 6.8M596.1 185.1l7.2 -1.5M596.1 185.1l-1.1 9.0M604.3 186.3l8.9 -1.2M604.3 186.3l-0.8 6.5M615.0 187.9l1.4 9.4M621.0 185.9l7.7 -0.0M630.0 188.3l9.4 0.3M630.0 188.3l-0.9 9.3M636.7 188.0l1.3 6.7M644.1 187.2l7.6 1.3M650.1 188.4l6.9 -0.5M650.1 188.4l-0.3 5.5M659.9 188.3l5.7 -0.7M664.7 185.4l7.8 -1.1M664.7 185.4l0.2 8.5M672.6 189.0l8.5 -1.3M686.5 188.5l0.9 8.4M695.8 186.5l8.8 0.8M701.3 187.3l-1.4 9.1M711.6 187.9l7.3 0.9M711.6 187.9l0.7 8.3M724.3 186.6l7.5 0.8M741.4 185.4l7.5 -1.2M747.5 186.0l7.6 -0.5M756.0 186.7l5.7 0.6M283.0 194.5l9.1 -1.3M283.0 194.5l0.9 6.8M289.8 194.2l8.5 -1.2M298.9 193.9l0.4 5.9M304.8 194.7l-1.4 7.7M314.5 193.6l8.0 -0.8M314.5 193.6l-1.3 8.0M329.4 193.6l9.4 1.3M336.0 193.9l6.8 -0.8M343.6 195.0l-0.9 5.9M350.0 196.2l8.7 -1.0M350.0 196.2l0.9 6.7M358.9 194.9l-0.4 9.4M373.8 194.4l-0.7 6.7M379.4 195.3l6.0 0.0M389.1 195.2l0.0 5.6M395.6 192.6l6.0 -0.5M395.6 192.6l-0.8 5.8M409.0 193.3l-1.1 8.1M419.9 196.2l0.7 9.2M440.8 192.6l9.0 0.6M440.8 192.6l1.3 8.5M446.9 195.3l1.3 7.2M456.9 192.5l6.7 -0.8M464.2 195.1l-0.6 7.1M486.2 195.9l-1.4 8.3M506.6 196.1l8.8 1.3M506.6 196.1l0.6 7.7M517.2 194.3l6.4 1.0M517.2 194.3l1.2 5.6M529.8 194.9l5.8 1.0M529.8 194.9l0.9 5.6M536.7 193.4l-1.4 7.0M545.0 195.9l0.7 6.9M554.1 195.1l7.4 -0.2M554.1 195.1l0.2 8.3M566.8 193.1l9.3 -0.3M577.4 195.3l8.5 0.0M589.2 194.8l8.2 0.8M589.2 194.8l-0.4 6.5M599.8 194.5l9.4 0.8M605.5 193.0l5.8 -0.3M605.5 193.0l-0.1 9.4M613.1 193.2l8.2 0.0M613.1 193.2l-0.0 7.1M621.2 194.9l7.5 -0.7M636.0 194.5l8.4 -0.9M636.0 194.5l0.3 6.6M644.5 194.7l-0.1 6.8M664.6 196.2l5.8 0.1M679.7 193.2l8.8 0.2M689.2 194.7l1.2 8.8M694.2 196.1l0.7 7.2M712.1 194.4l8.4 0.5M712.1 194.4l0.0 6.6M718.6 193.2l6.5 -0.7M732.6 194.2l0.8 9.2M742.0 192.8l-1.1 8.0M283.9 202.8l0.4 6.0M288.8 201.8l1.4 6.7M298.0 201.9l-0.7 8.0M304.9 201.4l9.2 -0.2M312.0 203.7l8.3 -1.3M319.8 203.8l8.9 -1.4M319.8 203.8l1.5 7.0M326.2 201.0l7.6 -0.4M326.2 201.0l-0.1 7.4M344.0 201.8l9.3 -1.1M344.0 201.8l-0.2 7.2M349.3 203.4l7.7 0.3M349.3 203.4l-0.2 6.0M364.0 201.8l1.3 7.5M374.5 200.3l8.3 1.0M374.5 200.3l1.1 8.5M380.2 202.8l6.0 1.2M389.6 200.9l-0.0 6.7M395.5 201.5l7.2 0.8M402.1 200.8l6.8 -0.2M411.6 203.9l6.7 0.1M411.6 203.9l0.4 5.7M418.4 202.3l9.5 -0.6M418.4 202.3l-1.2 6.5M426.5 203.0l9.0 -1.0M426.5 203.0l0.2 7.6M441.3 202.3l7.8 1.3M441.3 202.3l-0.5 6.7M447.0 203.1l0.6 9.0M463.2 202.0l7.8 1.2M478.0 201.2l9.4 0.4M478.0 201.2l0.1 7.2M485.9 201.1l1.0 6.5M494.6 202.2l7.2 1.3M500.6 201.5l6.6 -0.2M500.6 201.5l-1.3 7.0M506.1 202.7l9.1 -0.5M506.1 202.7l0.1 6.7M516.4 201.2l-1.3 9.0M523.8 201.1l0.0 6.6M530.7 202.6l0.2 7.8M561.1 201.0l5.5 0.7M568.9 203.9l-0.5 9.2M573.9 203.5l-0.9 8.4M583.6 200.1l6.3 1.1M588.6 201.6l9.1 1.2M596.0 203.8l8.1 0.8M604.0 201.0l-0.4 9.2M612.6 200.6l0.9 7.0M621.8 203.3l7.7 -0.2M621.8 203.3l1.2 6.9M636.2 200.5l-0.1 6.4M651.5 201.6l6.7 0.5M651.5 201.6l0.9 6.7M657.5 200.3l6.4 -1.4M657.5 200.3l-0.4 9.0M663.7 203.9l8.8 -0.4M663.7 203.9l0.3 6.9M682.5 201.0l0.0 6.6M687.6 203.7l7.2 1.2M687.6 203.7l0.9 7.6M694.9 202.9l1.5 5.9M704.4 202.9l0.7 5.7M711.2 203.5l8.5 0.6M719.1 201.9l7.6 0.8M719.1 201.9l-0.1 8.8M723.6 203.5l7.0 0.6M732.2 200.6l9.1 1.5M741.3 202.7l-1.1 8.9M746.1 202.1l9.2 0.4M746.1 202.1l-1.3 7.4M755.7 201.9l-0.4 8.8M282.2 208.3l9.3 1.1M282.2 208.3l-0.5 7.0M298.7 208.0l0.7 6.9M303.6 210.1l9.1 -1.0M312.7 207.7l6.7 0.8M322.2 208.2l7.0 -0.5M322.2 208.2l0.8 5.5M328.1 208.0l6.7 -0.1M336.4 209.2l-0.9 8.0M344.1 210.4l8.4 -0.5M351.5 210.7l9.2 -0.1M357.8 211.3l7.6 0.2M366.9 210.9l8.3 0.1M366.9 210.9l-1.2 9.1M375.0 210.4l-0.5 6.8M378.8 209.0l7.2 -1.3M378.8 209.0l1.4 7.7M386.9 209.3l7.4 -1.0M403.1 209.6l-1.3 7.3M411.8 210.2l8.8 -1.4M416.7 208.7l8.0 0.6M425.5 207.7l5.8 -1.1M425.5 207.7l-0.6 6.1M434.4 208.9l8.6 -1.0M447.2 210.0l7.5 0.4M463.7 210.7l6.3 1.0M463.7 210.7l-1.4 8.5M469.0 208.6l1.0 6.6M486.4 208.3l-0.8 8.6M491.6 209.2l7.8 -1.0M491.6 209.2l1.4 7.3M500.5 207.6l5.9 0.4M500.5 207.6l-1.0 6.1M509.0 210.1l6.8 -0.7M515.8 208.0l8.0 -0.7M521.7 207.9l8.9 0.1M521.7 207.9l-0.4 8.0M529.4 210.8l7.6 0.2M529.4 210.8l1.5 7.7M536.5 210.5l8.2 1.0M552.1 211.2l1.2 5.6M559.8 208.3l7.5 -1.4M566.8 210.2l9.2 0.2M566.8 210.2l0.8 7.7M582.9 211.5l8.5 -1.0M582.9 211.5l0.4 6.5M597.1 210.6l0.2 8.1M604.5 207.7l7.6 0.4M612.1 208.2l6.2 -0.7M612.1 208.2l0.6 5.9M619.2 209.4l6.2 0.5M629.9 211.3l0.1 6.6M658.0 207.9l5.6 -0.9M663.9 208.3l9.4 -1.0M663.9 208.3l0.1 5.7M673.3 207.8l6.8 1.5M673.3 207.8l-0.6 6.8M679.7 208.1l8.3 -0.4M679.7 208.1l-1.4 8.7M701.1 208.7l-1.0 9.4M718.8 207.6l6.4 0.5M724.0 210.2l1.2 6.8M732.5 210.7l8.0 -1.3M754.9 207.6l-1.4 7.9M285.0 216.8l5.6 -1.0M285.0 216.8l-0.5 6.6M292.0 219.0l0.6 6.2M297.8 217.0l8.6 -0.8M306.6 217.5l6.0 0.9M319.0 215.8l8.3 -0.4M326.7 217.6l7.3 0.3M334.3 218.1l6.2 0.6M334.3 218.1l1.0 9.1M350.5 216.5l1.2 6.9M357.6 218.3l0.5 9.5M372.6 216.5l8.0 -0.5M378.7 218.0l9.0 1.0M378.7 218.0l-1.2 6.3M386.8 218.9l-1.5 7.7M401.5 218.9l7.4 -1.0M401.5 218.9l-0.9 6.6M410.7 216.0l5.9 -1.3M417.8 216.8l9.4 -1.5M423.7 216.2l7.3 0.6M433.8 215.3l6.6 -0.1M433.8 215.3l-1.2 6.0M448.4 215.8l-0.7 8.7M454.6 216.2l6.5 1.3M454.6 216.2l0.7 7.5M462.1 216.4l6.7 0.0M462.1 216.4l-0.3 6.0M479.6 216.8l8.9 -1.1M479.6 216.8l-1.3 8.8M486.5 218.7l8.8 0.6M492.8 218.2l9.3 1.3M492.8 218.2l0.1 7.2M502.1 218.4l7.0 -0.5M508.7 217.5l8.2 -1.5M508.7 217.5l0.6 8.4M523.5 218.3l6.3 -0.8M536.2 215.1l0.8 8.9M552.6 217.6l9.3 0.3M561.3 216.4l7.6 1.1M568.2 215.9l6.5 -0.6M568.2 215.9l1.3 6.6M574.4 218.0l-0.6 7.2M581.2 215.4l-0.8 8.7M599.7 218.9l8.5 -1.4M599.7 218.9l-0.7 6.0M618.8 216.8l7.4 1.4M618.8 216.8l-0.5 7.8M628.6 216.2l7.5 1.3M628.6 216.2l1.2 7.7M637.2 216.6l-0.8 8.1M651.2 217.3l9.4 -0.4M651.2 217.3l-0.2 7.2M656.8 216.7l9.3 0.1M656.8 216.7l0.1 7.9M665.1 218.2l9.2 0.8M678.7 216.1l8.2 1.2M696.7 215.6l8.0 -1.3M717.9 216.8l0.9 7.7M734.3 217.8l5.5 -1.1M734.3 217.8l0.0 5.8M740.4 218.0l9.0 -0.4M740.4 218.0l-0.7 6.0M748.3 215.5l6.7 0.7M284.2 226.5l1.4 9.1M288.5 226.4l-0.1 6.7M299.1 224.1l9.1 -0.5M299.1 224.1l0.6 6.0M305.9 224.3l9.3 0.6M305.9 224.3l1.2 8.1M314.3 225.6l6.8 -1.0M328.1 224.3l9.4 -1.1M328.1 224.3l1.1 5.6M334.3 224.6l7.0 -1.4M341.3 223.7l8.3 -0.8M348.6 224.8l9.1 -0.9M348.6 224.8l1.1 5.7M358.0 224.4l6.2 -0.0M358.0 224.4l-1.5 6.6M365.0 223.5l0.3 7.9M386.2 225.5l9.3 -0.2M386.2 225.5l1.2 9.2M396.6 224.3l8.4 1.2M396.6 224.3l0.6 7.7M403.2 223.4l6.5 1.5M403.2 223.4l-0.8 6.3M411.8 225.2l5.9 0.5M418.6 225.4l0.9 9.0M434.3 225.9l9.0 1.0M434.3 225.9l1.2 8.8M442.2 226.1l6.2 0.9M442.2 226.1l-0.5 8.7M449.3 224.1l8.3 1.5M454.9 223.5l7.9 0.7M454.9 223.5l0.7 7.9M463.3 224.6l5.6 0.1M472.1 226.4l1.1 7.2M479.9 226.3l5.7 -1.4M485.5 225.0l7.9 -1.2M485.5 225.0l0.7 6.4M502.0 225.4l6.1 0.2M509.3 222.6l0.8 5.9M530.5 224.9l7.0 0.8M539.9 226.2l0.0 7.5M546.7 226.1l5.5 1.1M552.4 224.9l7.0 0.4M562.1 224.0l7.3 1.5M569.7 226.4l8.6 -1.2M569.7 226.4l0.4 5.8M575.8 225.3l7.7 -0.3M575.8 225.3l-0.7 9.3M591.5 224.1l6.8 -1.3M596.3 224.0l1.2 5.6M614.6 225.8l9.5 -1.4M614.6 225.8l-0.5 5.6M619.3 226.5l1.5 8.5M626.1 224.9l6.6 0.7M626.1 224.9l-0.4 5.5M634.8 223.7l5.9 -0.3M634.8 223.7l1.3 6.5M642.5 222.8l-1.3 7.0M652.2 226.2l7.8 -1.3M659.0 223.5l-0.1 6.6M665.8 223.5l6.5 -1.5M665.8 223.5l0.9 7.3M673.0 225.1l6.3 -0.3M681.4 224.3l1.3 8.1M695.6 225.5l8.6 -0.5M701.6 224.1l-0.9 7.7M718.4 223.1l6.6 -1.5M749.4 224.8l7.6 -0.5M754.0 226.5l7.3 0.3M754.0 226.5l0.3 5.7M291.6 233.0l7.8 -1.3M299.2 230.8l5.9 0.5M303.7 232.5l1.2 6.6M311.1 230.3l1.1 7.2M318.8 233.3l6.0 -1.5M318.8 233.3l-0.1 7.5M328.3 230.3l9.0 -0.2M337.1 232.4l-0.9 7.6M344.9 233.9l8.0 -0.6M344.9 233.9l-0.7 9.5M350.0 231.9l8.9 -1.2M357.0 230.9l6.9 1.4M357.0 230.9l-0.5 8.5M387.9 233.1l7.0 0.4M397.5 233.5l7.2 0.1M397.5 233.5l-1.3 7.0M410.6 233.7l0.3 9.3M417.2 231.5l9.0 0.2M425.9 233.6l7.7 -0.2M425.9 233.6l1.4 8.1M433.0 230.4l-0.1 6.3M440.1 230.9l7.2 -1.1M440.1 230.9l0.7 5.9M449.4 231.6l8.6 -0.4M449.4 231.6l-1.5 6.2M457.2 232.0l7.9 -1.2M457.2 232.0l1.1 8.0M462.3 233.5l7.3 0.9M469.6 233.9l6.6 0.0M478.2 231.9l-0.2 8.2M487.1 231.0l7.4 -0.7M500.5 231.4l7.7 1.0M500.5 231.4l-0.7 8.8M514.7 232.4l8.2 0.9M524.1 230.5l8.2 0.4M530.3 230.2l5.7 0.1M530.3 230.2l-1.4 9.1M544.4 233.8l8.8 -0.2M562.4 232.4l6.1 0.2M562.4 232.4l-0.4 9.3M577.1 231.3l1.5 9.2M581.8 231.5l7.4 0.3M589.1 232.6l-0.7 6.5M598.4 230.5l6.7 0.6M605.7 230.6l5.7 1.5M605.7 230.6l1.0 6.5M612.1 230.6l8.2 0.2M612.1 230.6l-1.1 6.6M626.7 230.0l0.5 7.5M635.1 232.3l8.5 1.0M635.1 232.3l-0.7 8.9M652.5 230.8l5.5 -1.1M652.5 230.8l1.4 8.5M656.7 231.6l6.1 -1.3M656.7 231.6l-0.6 5.6M667.4 233.9l7.2 0.2M672.6 233.7l0.2 9.3M679.7 234.0l8.2 -1.2M679.7 234.0l0.5 6.3M702.3 231.4l-0.1 7.8M711.5 230.6l6.0 0.1M711.5 230.6l1.3 6.3M717.8 233.1l5.8 -0.8M724.9 233.8l6.7 -0.0M724.9 233.8l-0.6 5.9M733.0 233.0l9.4 0.4M733.0 233.0l-0.4 6.6M738.9 231.9l8.7 -1.3M738.9 231.9l1.2 6.9M748.9 233.5l6.2 0.8M748.9 233.5l0.0 5.5M755.8 231.8l6.3 1.3M282.2 238.8l6.9 -0.3M288.6 239.0l7.9 -0.5M297.7 238.1l0.6 9.2M304.2 240.5l1.2 6.1M313.1 241.4l9.0 -0.3M336.5 238.2l5.6 1.4M342.0 239.9l7.7 0.9M352.4 240.1l7.6 -1.0M352.4 240.1l1.2 9.4M359.3 238.3l-0.5 8.7M373.8 238.1l8.5 -0.9M373.8 238.1l-0.1 6.2M379.6 238.1l5.9 -0.3M379.6 238.1l-1.1 6.2M387.6 237.8l5.7 0.7M387.6 237.8l-0.1 6.0M396.2 241.4l-0.9 6.2M411.8 239.2l6.9 0.5M411.8 239.2l0.6 7.3M419.4 239.9l7.2 -0.8M423.7 239.1l7.9 -1.2M431.5 238.6l5.8 1.5M431.5 238.6l1.2 8.2M442.2 239.9l7.3 0.1M442.2 239.9l-1.0 7.8M454.3 239.7l8.9 0.8M454.3 239.7l-0.5 9.1M462.7 237.8l-1.1 8.9M469.3 238.3l6.5 -0.5M469.3 238.3l1.3 7.9M493.9 240.1l9.2 0.9M493.9 240.1l0.1 6.3M499.4 240.0l5.5 0.4M509.6 237.6l6.0 1.2M522.9 239.7l5.7 -1.0M529.1 241.0l5.6 0.4M547.2 240.7l7.2 -0.9M552.6 239.3l6.2 0.3M581.8 238.8l6.6 -0.7M581.8 238.8l-1.2 7.7M603.8 238.1l6.2 1.3M611.6 237.5l9.0 -0.5M636.0 238.6l6.4 0.2M643.4 239.9l8.5 1.4M643.4 239.9l0.4 7.6M649.5 241.1l7.2 1.3M657.6 238.3l8.5 0.5M667.3 239.0l8.0 1.3M674.4 240.8l8.1 -0.8M681.6 240.7l7.0 -1.0M688.8 239.7l8.4 -0.1M688.8 239.7l1.4 8.6M695.5 239.7l6.4 -1.3M704.3 238.5l7.2 -0.6M709.5 238.5l8.9 0.6M709.5 238.5l-1.1 5.7M718.7 240.1l6.6 1.1M718.7 240.1l0.7 8.8M742.4 240.2l6.0 -0.0M742.4 240.2l0.5 7.4M756.6 238.3l6.0 -1.0M756.6 238.3l-0.7 9.3M281.4 247.1l9.0 -1.2M289.8 246.4l8.0 -1.3M314.7 246.4l7.2 1.3M318.9 248.0l0.4 9.0M336.9 245.6l7.8 -0.5M336.9 245.6l-1.5 7.3M345.0 246.6l7.0 0.3M345.0 246.6l-1.0 7.6M350.0 247.8l5.8 1.2M358.6 247.4l6.1 -0.2M365.4 247.0l9.3 -0.8M365.4 247.0l0.9 9.3M372.5 246.8l-1.1 6.4M379.9 245.0l9.1 1.0M387.2 246.4l-0.2 7.0M403.4 248.7l0.0 6.6M412.1 248.2l8.1 0.4M416.6 247.3l7.2 -0.4M416.6 247.3l-0.3 7.6M423.9 247.1l8.3 -1.4M423.9 247.1l-1.5 8.6M434.8 248.0l7.4 0.8M434.8 248.0l-0.4 7.4M439.2 246.8l6.1 0.3M439.2 246.8l-1.1 7.6M446.9 247.3l8.4 0.3M446.9 247.3l-0.5 8.5M464.0 246.7l5.8 -0.6M464.0 246.7l0.9 8.6M471.0 248.1l8.1 -0.4M471.0 248.1l0.1 9.0M478.0 248.6l6.5 -1.0M478.0 248.6l-0.6 5.9M484.8 248.8l-0.8 7.5M492.3 247.5l8.0 0.8M492.3 247.5l-0.8 7.8M500.8 248.5l-0.0 8.7M508.3 245.5l6.0 0.5M516.0 245.2l5.6 0.5M521.8 247.9l6.1 1.3M521.8 247.9l0.4 9.2M531.6 246.8l7.1 -1.0M538.1 248.1l6.4 -0.7M538.1 248.1l0.7 7.5M545.0 248.9l6.9 -0.8M545.0 248.9l-0.8 7.5M552.7 246.9l0.3 7.5M562.3 247.4l-0.9 6.3M569.3 245.5l8.9 -1.3M581.9 245.5l1.3 6.8M589.8 245.2l7.7 -1.1M605.3 246.4l-0.1 6.5M622.4 246.1l5.8 -1.2M627.4 246.5l8.3 -0.9M633.6 248.7l7.3 0.0M633.6 248.7l1.2 7.6M649.0 246.2l7.5 -0.7M656.8 246.6l6.8 0.6M656.8 246.6l0.9 6.9M666.8 248.3l9.2 1.3M666.8 248.3l0.2 9.0M671.9 248.5l8.8 -0.4M682.0 246.5l8.0 0.2M682.0 246.5l1.2 7.2M694.1 248.8l6.0 0.7M694.1 248.8l0.9 7.2M703.2 247.9l-1.2 7.4M709.1 248.2l6.9 -1.2M709.1 248.2l-0.4 6.6M716.8 246.1l0.0 8.1M723.6 248.3l-1.3 5.8M741.1 246.8l7.4 0.8M741.1 246.8l-0.7 7.5M747.7 247.4l9.4 -0.9M753.6 248.3l6.7 -0.2M281.5 254.5l0.7 9.5M291.7 253.5l7.7 0.8M307.0 255.7l6.4 -0.3M312.3 255.8l8.3 1.1M320.8 254.9l8.9 -0.9M320.8 254.9l1.1 7.6M337.0 254.1l7.5 -1.2M337.0 254.1l0.3 6.9M349.5 254.8l-0.1 5.8M358.7 254.2l8.3 0.9M358.7 254.2l-1.5 7.8M373.8 252.6l5.7 1.3M381.3 254.9l1.5 7.0M387.7 252.5l9.2 -0.9M396.4 255.4l8.3 1.0M396.4 255.4l-0.3 7.8M403.8 254.8l6.5 -0.4M411.0 253.6l1.4 8.3M419.5 254.1l8.7 -1.0M431.1 253.6l5.8 0.1M431.1 253.6l-0.0 6.1M448.5 253.2l9.1 -1.3M448.5 253.2l-0.8 6.4M454.1 255.4l9.4 -0.5M462.5 255.6l9.4 -0.8M469.8 252.6l6.0 0.8M469.8 252.6l-1.4 7.7M478.3 255.1l1.2 8.7M486.5 252.5l6.3 1.1M486.5 252.5l-0.3 6.3M493.9 253.0l8.5 -0.4M493.9 253.0l0.0 6.3M501.4 255.8l5.7 -0.4M501.4 255.8l1.0 9.3M508.4 254.6l0.1 8.0M516.9 253.7l7.3 -1.4M516.9 253.7l0.0 8.9M532.0 253.8l8.3 0.7M532.0 253.8l1.0 8.1M544.4 255.9l8.9 1.0M551.4 253.3l6.5 -0.4M562.1 253.2l8.6 0.2M562.1 253.2l1.4 6.2M566.3 256.0l0.2 9.3M599.6 256.0l6.9 -0.0M599.6 256.0l-0.6 9.0M607.4 254.5l5.9 0.1M612.2 255.1l-0.2 8.4M619.2 253.9l5.8 -0.8M629.0 254.1l7.6 -0.6M636.9 253.9l8.8 1.1M642.3 256.2l9.5 0.7M642.3 256.2l-1.0 8.7M658.7 256.2l-1.2 9.1M664.5 256.0l0.8 6.3M673.0 253.0l-0.2 5.6M682.4 255.0l6.4 0.9M682.4 255.0l0.2 5.7M687.5 254.4l-1.4 7.7M694.4 252.7l7.4 -0.2M694.4 252.7l0.6 5.7M702.2 254.5l9.4 -0.5M702.2 254.5l1.4 7.6M717.2 252.8l-1.3 7.2M733.7 256.0l0.5 6.5M741.7 256.1l8.3 -1.4M748.6 256.2l6.3 0.8M755.3 256.4l9.0 -1.2M755.3 256.4l0.5 5.7M296.4 261.8l7.3 -0.7M307.0 263.0l-0.0 7.2M313.9 263.5l8.9 -0.5M313.9 263.5l0.4 7.6M322.3 263.2l8.6 1.2M343.9 261.8l6.5 0.3M343.9 261.8l-0.5 7.1M349.1 261.1l9.2 0.7M349.1 261.1l-0.3 8.7M356.0 262.8l-1.5 6.7M364.8 262.7l6.2 0.7M364.8 262.7l0.3 7.0M372.3 261.6l8.7 1.2M381.2 263.4l7.4 -1.4M389.6 260.5l8.0 0.1M389.6 260.5l-0.3 6.9M395.9 263.6l7.7 -0.1M395.9 263.6l-0.9 7.3M401.5 262.7l9.0 -0.8M401.5 262.7l-0.9 8.4M411.9 263.5l8.1 -0.4M416.5 263.5l7.4 -1.2M424.3 263.9l6.9 -1.3M424.3 263.9l0.0 5.8M433.5 262.4l0.4 6.8M441.3 264.0l8.2 0.9M441.3 264.0l-1.4 7.5M448.0 262.4l0.9 8.3M454.5 260.9l8.9 1.1M463.1 262.0l0.6 7.6M470.8 263.4l7.5 1.4M470.8 263.4l0.3 6.6M479.1 262.6l6.1 -0.5M479.1 262.6l0.9 9.3M485.7 260.4l9.3 -1.3M485.7 260.4l-0.7 8.1M491.8 260.2l7.6 -0.2M499.4 262.6l-0.0 6.3M507.5 261.0l1.4 6.3M514.7 262.6l6.2 -0.5M524.3 262.4l7.8 1.4M524.3 262.4l-1.2 5.7M536.9 261.5l7.3 0.8M536.9 261.5l0.1 6.4M546.0 263.2l1.2 5.6M552.2 260.6l0.3 5.7M567.7 262.4l9.0 -0.6M567.7 262.4l0.9 7.0M582.9 260.7l6.9 -0.9M582.9 260.7l-0.4 8.1M588.8 264.0l-0.1 8.4M596.2 263.6l-0.5 9.4M604.6 262.9l-0.1 6.8M614.3 260.3l0.3 7.4M627.5 262.4l8.5 1.4M634.1 262.2l9.1 -0.5M634.1 262.2l0.6 7.9M643.0 262.4l5.9 -0.2M651.4 261.6l9.3 1.2M651.4 261.6l1.1 6.9M656.2 263.2l9.2 -0.2M656.2 263.2l-0.3 8.3M664.4 262.6l8.2 -1.5M671.8 261.5l-1.3 9.4M681.7 262.3l7.3 0.4M686.5 261.4l6.1 -1.2M697.4 263.3l6.8 1.5M703.4 260.3l8.5 -0.4M709.2 262.7l5.9 -1.1M709.2 262.7l-0.3 7.7M719.8 260.8l7.6 -0.8M719.8 260.8l0.0 7.1M726.1 262.0l7.3 -1.2M726.1 262.0l1.1 9.1M740.6 261.3l1.2 6.9M747.0 262.6l-0.8 5.8M756.0 260.5l0.7 6.6M284.6 268.5l0.7 6.7M299.1 268.6l8.2 -1.3M299.1 268.6l-0.9 6.2M304.5 267.6l0.7 9.3M320.3 271.0l7.3 -0.7M327.0 268.8l5.6 1.0M327.0 268.8l-1.1 9.1M336.6 267.6l7.2 -1.4M336.6 267.6l-0.5 9.4M341.2 270.3l8.0 -1.5M357.2 269.4l6.2 -1.3M357.2 269.4l-0.7 5.8M363.8 268.2l6.0 1.0M363.8 268.2l-1.2 9.0M371.7 268.4l8.8 -0.2M388.1 270.3l9.0 0.1M388.1 270.3l-0.5 9.3M394.7 268.0l0.2 6.9M402.0 268.8l0.6 8.0M409.5 271.1l-1.4 8.4M416.6 271.0l7.6 -0.7M424.7 267.6l9.0 0.5M424.7 267.6l1.0 5.7M431.9 269.0l5.9 0.9M431.9 269.0l0.5 6.2M442.1 271.2l6.3 -0.5M442.1 271.2l-0.4 8.2M456.1 267.8l6.4 -1.2M456.1 267.8l0.5 8.5M470.2 269.0l7.8 -1.1M470.2 269.0l0.0 8.5M485.5 268.2l6.7 -0.1M485.5 268.2l-1.4 9.5M491.0 268.7l9.4 -0.5M491.0 268.7l-0.0 8.0M502.0 270.3l9.1 1.2M502.0 270.3l1.0 9.2M509.4 271.2l8.0 0.8M515.9 271.0l1.3 7.1M521.4 271.2l8.7 1.2M531.3 268.8l7.1 0.9M531.3 268.8l-0.2 8.6M552.4 267.9l5.6 -0.6M552.4 267.9l-1.4 5.7M558.9 268.4l6.7 -1.2M558.9 268.4l0.2 7.0M568.7 268.4l-0.2 6.5M573.9 271.5l5.5 0.3M573.9 271.5l-1.2 6.4M581.8 269.0l6.7 0.8M581.8 269.0l1.2 8.3M592.0 269.2l7.8 1.5M592.0 269.2l0.5 8.8M598.2 268.0l1.3 7.4M604.0 269.6l6.7 1.2M613.3 270.1l0.8 7.9M622.5 270.7l-0.1 6.1M627.2 267.8l0.2 8.8M636.6 271.0l5.9 -0.1M644.9 268.9l6.5 -1.1M650.7 268.5l-0.9 5.8M667.4 267.5l7.5 0.0M667.4 267.5l-0.9 6.6M674.9 269.5l8.5 0.7M681.6 268.7l7.5 0.7M681.6 268.7l1.2 6.0M686.9 269.0l6.0 -0.6M686.9 269.0l0.3 7.7M694.1 270.5l7.7 1.2M701.4 268.8l9.1 -0.8M701.4 268.8l-0.1 6.8M711.6 267.6l6.8 -1.2M719.6 271.2l0.4 6.1M732.0 267.8l-0.6 7.7M741.2 269.9l8.8 0.5M748.7 270.1l6.9 1.3M748.7 270.1l1.2 6.5M281.0 276.6l7.8 1.4M281.0 276.6l1.3 9.2M289.2 278.5l-1.1 8.0M304.0 277.8l6.2 -0.1M304.0 277.8l1.1 5.6M322.4 275.2l7.4 -1.0M329.3 276.8l6.8 1.1M341.2 277.0l9.5 0.2M350.2 276.4l5.9 -0.3M350.2 276.4l-1.0 8.8M358.3 277.9l-0.7 6.2M366.0 276.2l8.8 -1.1M372.3 277.7l1.1 6.8M380.6 276.8l8.2 0.8M380.6 276.8l0.6 9.0M388.0 276.9l6.2 0.3M388.0 276.9l-0.4 9.2M404.4 275.5l6.2 -1.1M404.4 275.5l0.8 8.8M409.3 277.8l7.3 -1.1M409.3 277.8l0.9 8.4M418.0 278.5l6.7 0.5M418.0 278.5l-0.2 7.2M424.2 276.1l7.7 -0.5M441.8 276.9l9.1 -0.9M441.8 276.9l0.7 5.9M448.0 276.7l7.3 -1.2M456.9 276.7l0.3 9.4M461.9 277.4l9.2 -1.3M461.9 277.4l-0.4 7.7M469.5 275.7l8.8 1.4M469.5 275.7l-0.8 6.8M476.5 278.5l1.2 7.5M485.9 277.5l-0.4 7.7M493.5 277.9l6.3 0.5M493.5 277.9l1.4 9.3M506.2 278.2l-1.2 9.1M514.2 275.2l6.9 -0.6M514.2 275.2l-0.1 8.9M528.6 277.3l6.1 1.1M540.0 275.1l6.9 -0.4M540.0 275.1l1.2 7.4M547.4 275.2l5.9 1.4M560.1 277.4l8.9 -1.2M569.6 275.1l7.2 0.3M575.7 275.3l0.9 5.9M581.4 277.7l8.9 -1.3M581.4 277.7l-1.3 7.3M589.2 275.7l8.6 0.9M589.2 275.7l-0.5 6.5M598.8 276.5l-0.8 7.7M603.5 278.6l-1.2 7.0M612.4 276.4l6.1 -1.3M612.4 276.4l-1.1 6.3M620.2 275.6l7.8 0.2M620.2 275.6l0.6 7.6M626.8 278.5l-0.0 5.7M634.7 278.5l7.5 -1.4M634.7 278.5l1.1 9.1M642.8 278.9l1.0 6.5M650.9 276.9l6.3 1.5M657.6 278.3l0.9 8.9M664.9 278.7l6.4 1.2M671.9 277.1l8.6 -1.2M682.1 276.5l0.3 9.1M686.1 275.0l7.7 0.7M686.1 275.0l-1.3 5.5M693.5 275.8l-0.7 6.2M702.8 276.0l7.3 -0.2M710.2 275.2l8.4 0.1M719.8 276.2l7.1 1.4M725.8 278.0l7.3 -0.9M734.1 277.2l0.9 8.3M742.0 277.2l7.0 0.7M742.0 277.2l1.4 8.3M750.0 276.7l8.6 1.4M750.0 276.7l1.1 9.2M755.0 276.5l8.2 -0.2M755.0 276.5l-0.9 8.9M281.2 286.2l7.3 -0.7M281.2 286.2l-1.3 6.0M288.6 283.5l7.7 1.2M299.5 284.1l-0.4 6.4M322.4 286.2l9.1 -1.2M322.4 286.2l-0.6 6.4M327.5 283.3l6.6 0.1M333.7 282.9l6.4 1.4M342.9 286.5l5.7 -1.0M351.8 283.9l0.3 8.6M359.0 284.8l6.2 -0.3M367.5 286.0l-0.0 9.4M381.1 284.5l9.3 -0.4M389.8 283.7l5.5 -1.2M389.8 283.7l-0.0 5.6M411.7 283.6l-1.2 7.7M416.2 283.0l-1.1 9.0M424.2 285.9l6.6 1.0M424.2 285.9l1.4 5.8M431.2 283.1l-0.8 7.0M438.6 284.9l8.9 1.0M448.4 286.3l9.3 0.1M448.4 286.3l-1.0 8.5M457.5 282.6l8.6 1.0M457.5 282.6l-0.4 7.9M472.1 283.7l-0.5 7.3M493.4 282.7l6.7 -0.1M499.2 286.3l8.4 0.5M509.0 283.5l1.4 6.0M513.9 283.0l5.9 -0.3M522.8 282.7l5.6 0.3M522.8 282.7l0.1 6.9M532.0 284.4l8.7 -0.0M539.7 282.8l6.9 -0.6M539.7 282.8l-0.4 8.5M547.4 285.9l-1.3 7.9M554.9 282.6l7.0 0.9M561.6 285.7l8.3 1.1M561.6 285.7l-1.4 8.8M569.6 282.6l0.6 7.5M576.9 285.8l7.9 -1.0M576.9 285.8l0.6 7.2M584.6 286.2l-1.1 6.8M588.5 284.5l1.4 5.5M599.9 283.7l9.2 -0.1M599.9 283.7l1.3 9.4M603.6 285.1l7.8 -0.3M613.9 285.1l-0.6 5.8M620.2 285.5l6.6 1.5M620.2 285.5l1.4 8.4M665.0 283.2l7.1 -0.1M671.6 283.4l5.8 0.3M682.1 285.0l9.1 0.3M686.7 282.7l5.6 0.1M697.0 285.1l5.6 1.2M697.0 285.1l-1.4 7.9M708.5 283.5l7.4 -0.1M708.5 283.5l0.6 8.9M716.1 284.1l7.6 -0.4M725.1 283.1l-0.3 8.6M732.5 283.1l6.0 0.1M732.5 283.1l-1.0 8.8M740.8 284.3l-0.7 6.6M749.0 284.0l6.8 -1.3M749.0 284.0l-0.3 9.1M754.9 284.9l7.5 1.0M754.9 284.9l-1.1 6.4M282.4 291.1l6.3 0.3M282.4 291.1l0.4 6.2M289.9 290.8l-0.6 6.0M298.3 291.1l0.3 7.6M307.2 291.0l0.2 8.2M311.1 291.2l6.1 0.8M311.1 291.2l-0.2 6.3M328.4 293.6l9.3 -0.6M328.4 293.6l1.2 5.9M335.3 292.9l-0.4 8.8M342.8 291.3l8.5 -1.4M359.1 290.7l9.0 0.2M359.1 290.7l-0.3 7.0M366.9 293.0l8.5 0.9M366.9 293.0l-0.9 7.6M371.2 292.9l7.2 1.2M371.2 292.9l-1.1 9.0M378.5 293.7l0.8 6.6M387.4 293.6l6.9 1.3M387.4 293.6l0.2 5.7M397.5 292.5l-1.1 6.6M416.7 291.7l9.5 -0.9M425.6 291.9l9.0 -0.2M425.6 291.9l-0.3 5.8M432.2 291.0l0.8 5.6M447.6 293.5l7.7 0.0M447.6 293.5l1.2 9.3M455.9 293.8l6.9 1.4M455.9 293.8l1.5 5.8M462.2 292.5l-0.9 5.6M469.2 292.1l6.0 0.5M469.2 292.1l1.4 8.9M484.6 290.0l5.5 -0.4M484.6 290.0l0.6 7.1M498.6 291.7l-0.4 8.7M509.4 291.1l6.4 0.8M514.1 291.3l7.5 -0.5M514.1 291.3l-0.3 7.7M524.7 290.0l-0.9 8.7M528.5 290.8l6.8 0.8M528.5 290.8l0.1 5.9M536.1 290.9l6.0 -0.4M547.4 291.0l7.1 -0.9M552.9 292.5l6.4 -1.1M552.9 292.5l-0.3 7.4M558.6 291.7l8.3 1.3M558.6 291.7l-1.3 7.8M574.5 291.5l0.6 6.2M582.1 293.2l0.7 6.2M598.1 291.0l9.3 -1.2M598.1 291.0l0.2 5.7M607.2 292.8l0.5 5.5M614.3 293.4l8.1 -0.8M614.3 293.4l-0.3 8.6M626.6 293.2l5.6 -0.3M626.6 293.2l1.2 6.3M634.5 290.3l7.5 -0.8M644.7 290.6l6.3 -0.2M644.7 290.6l-0.4 7.7M652.1 292.3l7.5 0.1M652.1 292.3l-0.7 7.0M657.3 292.3l-0.4 5.8M672.5 293.3l1.0 7.6M679.4 290.6l8.2 -0.4M688.9 290.2l8.1 0.9M688.9 290.2l0.5 6.8M703.1 291.3l6.6 -1.2M711.8 292.6l9.3 0.1M716.9 293.7l7.1 -0.2M725.8 292.2l8.2 -1.4M734.6 291.9l7.6 0.2M741.6 291.4l9.2 -1.0M748.1 291.0l6.1 0.3M753.9 292.2l9.3 1.1M753.9 292.2l0.5 7.2M292.3 299.9l-1.3 6.1M299.0 301.1l7.3 1.1M305.1 301.3l0.3 7.6M318.9 301.1l8.6 -0.9M318.9 301.1l-0.2 9.5M329.8 300.4l7.2 -0.8M336.0 300.5l5.6 -0.4M336.0 300.5l-0.3 6.8M342.4 301.0l6.9 0.2M342.4 301.0l0.5 8.5M349.9 300.3l7.2 0.9M349.9 300.3l0.1 7.5M372.1 300.8l6.8 -0.5M388.6 300.9l7.6 0.6M388.6 300.9l1.2 6.0M401.7 301.0l9.0 0.2M409.7 299.1l9.2 -0.7M439.3 298.1l9.0 1.1M455.4 301.0l8.8 -0.1M464.5 298.3l8.8 -1.5M486.7 300.0l9.0 0.0M494.0 301.3l7.6 0.2M494.0 301.3l-1.2 8.8M499.3 297.9l8.5 -0.1M508.4 300.2l-0.7 6.5M515.1 297.7l0.4 5.8M523.4 300.1l5.9 -0.2M529.1 299.5l7.6 1.3M529.1 299.5l0.0 7.2M536.4 298.0l0.3 6.5M554.6 298.7l9.4 1.4M554.6 298.7l0.7 8.1M562.3 300.2l7.2 -1.5M569.0 298.0l8.7 -0.4M573.6 299.6l9.2 1.2M573.6 299.6l1.5 6.3M585.0 300.1l9.3 1.1M598.3 299.0l0.8 8.0M606.7 299.2l-1.4 6.6M612.6 298.3l7.2 -1.3M612.6 298.3l-0.1 7.9M618.9 298.3l7.4 -1.2M635.9 299.3l6.3 1.1M635.9 299.3l0.1 7.3M644.3 299.3l8.3 -0.7M651.8 298.3l-0.9 9.2M659.4 298.4l9.4 0.3M659.4 298.4l0.3 6.3M665.8 301.4l6.7 0.4M673.8 299.9l8.9 1.1M673.8 299.9l-1.1 6.3M682.3 298.6l-0.8 6.7M686.2 300.7l-0.3 8.0M697.1 300.1l0.3 8.9M704.4 298.7l6.3 1.3M712.3 300.2l7.7 0.5M719.7 298.5l9.0 -0.4M719.7 298.5l0.7 6.6M732.0 301.3l5.6 -0.4M739.0 297.7l8.2 0.6M739.0 297.7l0.6 9.2M747.3 301.3l6.8 -0.4M755.9 298.2l1.0 7.6M289.0 308.2l-0.6 6.0M296.4 305.9l6.6 -0.3M296.4 305.9l0.5 7.6M307.1 305.3l9.4 -0.7M307.1 305.3l0.1 7.8M329.5 306.3l8.7 0.5M329.5 306.3l0.5 6.7M352.2 306.2l-0.3 8.5M358.8 305.7l8.1 -1.1M367.1 306.3l5.6 0.3M367.1 306.3l0.9 7.0M373.8 306.9l-1.0 6.3M388.9 307.7l7.8 -1.2M388.9 307.7l-0.3 9.0M395.8 305.2l8.2 0.4M404.9 308.7l9.4 1.0M408.5 308.0l9.1 -1.1M418.2 306.9l-0.0 8.9M426.4 305.2l1.1 9.1M432.6 306.4l8.8 1.1M442.2 306.5l8.6 0.1M442.2 306.5l0.8 7.6M448.2 307.9l8.4 -1.3M448.2 307.9l-0.6 8.0M455.3 307.7l8.6 0.4M462.3 306.3l1.5 6.9M469.6 308.1l6.0 -0.3M469.6 308.1l-0.4 6.9M478.1 305.1l9.3 1.3M478.1 305.1l-0.6 6.7M492.0 306.9l7.8 -0.2M492.0 306.9l0.5 8.7M515.9 305.9l1.2 9.1M529.2 307.9l8.8 -0.6M539.3 308.0l1.2 8.9M552.9 308.8l8.6 0.8M552.9 308.8l-1.0 9.1M561.1 306.1l0.6 7.3M569.6 308.3l8.6 0.1M569.6 308.3l-0.5 8.8M575.3 305.7l5.9 -1.2M575.3 305.7l-1.5 7.3M596.8 307.7l6.3 -0.5M605.1 307.6l-1.0 9.2M621.3 307.1l0.9 6.6M628.9 308.9l8.7 -1.4M628.9 308.9l0.4 8.7M636.1 305.8l-0.1 9.3M642.6 305.9l6.4 1.2M642.6 305.9l-1.4 5.6M651.5 307.4l6.3 0.7M660.0 306.0l0.0 6.6M664.0 308.2l5.5 -0.9M664.0 308.2l-1.2 7.9M679.2 306.3l7.6 0.3M679.2 306.3l0.7 5.9M689.7 306.8l7.2 0.0M689.7 306.8l0.1 6.7M695.7 308.0l8.6 0.8M695.7 308.0l0.3 8.6M702.4 308.1l-1.3 6.6M740.2 306.5l7.5 -1.2M747.6 307.5l1.3 9.1M292.2 315.0l7.9 1.3M292.2 315.0l-1.0 9.0M296.1 315.3l8.8 1.0M296.1 315.3l-0.2 7.7M303.7 315.8l7.0 -0.4M303.7 315.8l1.1 9.3M314.4 312.9l-0.5 8.5M321.1 313.1l7.8 1.2M342.4 314.1l7.3 0.5M342.4 314.1l0.1 7.5M352.5 313.2l8.7 0.9M352.5 313.2l0.1 8.3M356.1 315.7l9.0 1.4M366.0 315.0l1.0 7.2M374.4 315.4l9.0 -0.1M374.4 315.4l-1.4 6.1M378.8 314.9l1.5 7.9M386.4 314.4l6.6 1.3M396.8 316.2l-1.4 6.0M403.5 315.7l-0.2 5.7M409.5 315.0l5.9 -0.5M416.1 314.4l5.9 -1.2M424.9 314.2l-0.6 6.6M434.9 315.8l6.0 0.6M442.1 315.4l5.7 -0.6M442.1 315.4l0.4 8.6M449.7 312.7l7.9 0.8M454.2 313.1l0.3 5.6M464.4 313.9l0.7 6.7M476.0 312.7l-0.3 9.2M487.3 316.4l6.9 1.2M501.6 312.7l9.1 -0.3M501.6 312.7l0.7 7.9M507.3 314.1l9.4 -1.1M507.3 314.1l-0.1 9.0M516.2 315.7l6.7 -0.7M521.6 315.8l6.5 -0.8M531.3 314.6l0.8 7.8M538.1 313.6l6.0 -1.4M547.1 313.1l8.0 0.8M547.1 313.1l-0.4 7.3M559.5 314.9l5.8 -0.5M559.5 314.9l0.5 8.7M581.8 315.6l8.6 -0.2M591.3 314.6l-1.0 7.1M598.5 314.0l-1.3 8.8M605.4 313.3l-1.3 7.3M612.3 313.7l7.4 -0.6M622.2 315.6l7.5 -1.1M622.2 315.6l0.4 5.7M626.5 316.5l9.4 -1.5M626.5 316.5l-1.0 8.5M652.0 313.2l1.2 9.4M658.7 315.1l9.1 0.4M667.4 313.2l5.5 0.7M667.4 313.2l-0.1 5.8M673.4 313.4l7.0 -1.1M679.4 315.8l6.1 -0.2M689.8 312.9l8.4 0.1M689.8 312.9l1.3 5.7M704.4 314.2l7.5 0.0M704.4 314.2l-0.4 8.8M709.2 313.6l7.2 -0.2M717.7 316.3l1.5 7.9M727.0 313.5l7.3 0.3M727.0 313.5l1.3 6.3M740.2 315.6l-1.5 9.1M747.7 314.7l9.4 1.2M747.7 314.7l0.1 6.0M282.0 320.6l7.2 -1.4M282.0 320.6l-0.5 7.5M291.0 321.4l5.7 0.2M291.0 321.4l-0.8 7.4M298.6 321.9l7.9 -0.9M298.6 321.9l0.6 7.8M305.1 322.9l7.1 -1.5M305.1 322.9l0.5 7.5M320.3 322.5l7.9 0.9M320.3 322.5l-1.3 6.6M341.6 321.5l8.9 0.6M341.6 321.5l0.3 8.4M358.3 322.7l-0.7 8.7M364.9 321.2l8.8 -0.4M364.9 321.2l0.3 8.2M374.0 322.5l5.9 -0.0M382.0 322.3l8.5 0.5M382.0 322.3l-1.4 8.4M389.6 323.0l6.0 -1.0M389.6 323.0l1.3 6.9M396.0 320.4l7.3 -0.3M396.0 320.4l0.5 6.3M401.9 321.5l-1.1 9.5M410.8 321.4l5.5 0.3M410.8 321.4l0.9 8.2M417.3 322.9l7.4 0.5M417.3 322.9l-0.1 7.8M426.6 323.9l8.3 -1.2M426.6 323.9l-0.2 6.9M433.1 321.2l8.0 -0.3M442.2 323.5l7.0 -0.7M442.2 323.5l-0.8 6.5M446.3 324.0l0.9 7.3M455.8 322.6l0.8 7.1M461.1 321.7l0.6 5.9M471.4 322.6l6.3 -1.2M478.3 322.8l6.1 1.2M478.3 322.8l-1.0 7.9M492.5 322.3l9.1 1.1M492.5 322.3l-0.7 5.9M500.6 320.4l-1.2 5.5M506.8 322.4l7.0 -0.4M521.4 322.5l1.3 8.2M532.3 320.9l8.2 -1.0M537.3 320.6l9.0 -1.0M537.3 320.6l-0.3 6.4M552.2 321.0l6.7 0.2M552.2 321.0l1.1 8.6M561.0 323.8l1.1 9.1M569.1 323.7l9.3 0.5M569.1 323.7l0.7 9.1M591.3 321.0l5.9 -0.4M598.7 323.2l6.8 1.1M598.7 323.2l1.2 8.8M614.1 320.5l0.4 8.5M621.4 321.0l-0.7 8.5M666.4 322.9l8.6 0.9M666.4 322.9l-0.5 5.7M673.0 323.7l1.3 7.9M694.4 320.8l9.0 0.9M703.9 320.3l8.3 0.4M716.2 322.5l7.5 0.5M716.2 322.5l-1.1 8.4M733.2 323.5l7.0 -0.0M733.2 323.5l-1.1 5.9M740.9 320.8l6.9 -0.3M740.9 320.8l1.3 5.7M746.5 320.0l7.9 -0.3M754.2 321.4l-0.4 7.8M284.8 330.8l8.8 1.4M284.8 330.8l-0.5 9.1M290.1 327.8l8.4 -0.9M296.4 329.2l0.2 6.4M305.3 330.2l7.3 0.1M320.6 328.1l5.9 -1.3M320.6 328.1l0.6 8.3M329.1 328.3l5.6 0.0M329.1 328.3l0.7 8.5M334.8 328.5l8.9 1.2M343.8 330.2l8.3 -1.5M343.8 330.2l-0.8 6.7M351.6 330.3l9.4 -1.4M359.3 328.0l0.2 5.6M366.5 329.8l6.1 -1.1M366.5 329.8l-0.4 6.9M372.0 329.3l8.2 -0.3M372.0 329.3l-1.1 5.5M380.1 329.4l7.7 0.7M380.1 329.4l0.3 9.2M386.0 328.5l7.7 1.0M404.4 328.1l8.3 -0.8M410.7 331.4l7.6 -0.5M424.8 328.2l6.4 -0.1M432.8 329.8l8.3 -0.3M432.8 329.8l-0.2 7.5M441.1 331.5l7.7 -1.0M449.1 329.5l6.0 -0.3M449.1 329.5l1.1 7.2M457.2 330.9l5.9 0.7M457.2 330.9l1.5 8.0M463.7 329.3l6.0 -0.2M463.7 329.3l-1.5 8.9M477.6 328.8l7.0 -1.2M477.6 328.8l-0.5 6.9M486.7 328.1l-1.5 7.8M492.1 328.4l-1.0 8.6M501.7 331.0l7.1 -0.1M501.7 331.0l-0.6 7.5M506.5 329.6l9.4 -0.4M506.5 329.6l0.2 8.0M517.1 330.1l6.8 -0.7M530.1 328.2l7.0 -0.5M530.1 328.2l-1.4 7.8M545.0 328.9l-0.8 7.9M551.8 329.6l-1.5 7.2M558.9 330.2l5.9 0.7M568.6 327.8l6.7 0.6M568.6 327.8l1.0 7.8M573.7 329.0l8.7 -1.3M582.0 331.1l5.7 0.5M582.0 331.1l-1.1 8.8M597.5 331.1l9.0 1.2M605.0 331.3l7.0 -1.0M614.3 330.1l5.5 1.3M619.0 330.6l-1.1 9.1M628.6 331.1l6.2 0.7M635.0 329.1l8.2 1.3M635.0 329.1l0.4 9.4M642.0 327.9l8.6 0.9M642.0 327.9l-0.9 8.2M656.8 330.9l7.8 -0.8M656.8 330.9l-0.3 5.6M665.9 330.7l8.2 -1.3M665.9 330.7l1.1 7.8M680.1 331.3l5.5 -0.9M688.4 330.4l9.1 0.4M696.5 328.1l7.5 -0.7M710.9 328.3l8.8 -0.9M710.9 328.3l-0.4 8.1M723.9 328.6l8.3 0.4M741.6 329.6l5.5 -0.2M749.9 329.1l5.7 0.9M299.9 335.4l5.7 -1.4M299.9 335.4l0.8 5.9M304.0 338.2l6.9 1.4M304.0 338.2l-0.8 8.7M314.2 337.0l-0.3 5.7M330.0 335.8l1.5 8.5M341.6 336.0l-0.9 9.2M356.9 337.3l6.2 1.4M356.9 337.3l0.9 9.3M372.7 335.1l5.5 0.1M378.9 335.8l7.8 1.5M394.5 337.1l8.8 -0.4M394.5 337.1l0.4 8.6M411.7 337.0l8.7 0.8M411.7 337.0l0.4 8.7M419.7 337.5l7.8 -0.5M419.7 337.5l-0.2 7.5M425.5 338.1l6.3 -0.0M425.5 338.1l-1.4 9.5M439.7 335.3l6.5 -0.3M449.6 338.3l1.2 9.2M456.3 337.5l6.5 1.2M462.4 338.0l5.7 0.1M470.5 338.9l6.2 -0.7M470.5 338.9l1.4 7.6M491.0 335.2l0.1 7.7M499.3 336.3l7.5 1.0M499.3 336.3l-0.7 5.5M507.6 338.1l9.0 -1.5M523.9 337.0l-0.2 7.3M532.5 337.1l8.5 -1.3M539.8 338.8l7.4 -0.1M539.8 338.8l-0.7 6.6M543.5 335.6l-1.3 6.4M553.6 335.0l7.4 -0.5M553.6 335.0l-1.5 8.4M566.1 337.6l7.8 0.9M582.1 336.3l-1.3 7.4M592.3 335.6l7.5 1.1M597.1 335.6l5.7 -1.0M619.4 336.2l8.3 0.3M619.4 336.2l-1.5 7.1M627.6 336.4l-0.2 6.2M643.6 337.8l0.9 8.1M649.4 337.5l-0.8 8.9M679.6 336.8l9.0 -1.0M679.6 336.8l1.4 6.3M688.0 338.4l9.2 0.5M696.9 337.6l0.2 6.5M704.0 337.9l7.1 0.7M704.0 337.9l-0.4 7.0M711.6 338.7l7.8 -0.4M711.6 338.7l-0.8 9.3M718.9 339.0l5.6 0.0M723.7 335.9l-0.5 6.5M731.0 336.7l6.5 0.0M731.0 336.7l1.4 7.0M741.8 338.4l9.3 0.1M741.8 338.4l-0.0 7.6M747.4 338.0l6.9 0.5M747.4 338.0l-0.5 8.4M755.4 337.3l5.8 -1.0M755.4 337.3l-1.4 6.7M283.6 344.6l6.3 -1.4M283.6 344.6l-1.5 6.8M291.0 344.6l8.0 1.1M291.0 344.6l-1.3 6.0M298.0 343.0l0.8 7.2M312.3 346.1l8.2 -1.3M318.9 343.1l8.8 -0.1M328.1 345.6l6.5 1.3M328.1 345.6l-0.8 7.5M336.6 343.0l8.2 -1.0M336.6 343.0l-0.8 6.0M342.0 344.6l8.1 -0.3M348.7 342.6l9.2 0.8M356.9 346.4l8.4 0.6M356.9 346.4l-1.3 8.7M366.2 345.1l-1.3 9.2M371.8 343.3l-1.0 7.7M380.9 343.2l-1.2 8.3M386.2 344.4l8.0 -1.1M386.2 344.4l1.3 8.4M395.6 345.3l7.3 0.6M395.6 345.3l0.1 6.1M411.7 342.7l0.7 6.2M433.7 345.5l9.1 -0.7M433.7 345.5l1.2 5.6M438.7 345.9l7.7 0.1M446.9 344.8l-1.0 5.9M455.6 343.3l9.4 1.0M455.6 343.3l1.2 7.4M463.1 343.4l9.5 -1.4M463.1 343.4l1.0 7.9M470.4 346.4l-0.2 6.6M477.3 344.9l6.5 0.2M485.2 343.7l0.1 7.8M493.4 346.0l6.7 -1.2M498.8 345.2l-1.1 7.8M507.5 344.9l5.9 0.5M515.6 344.9l1.1 8.6M521.1 345.6l1.1 8.0M530.5 344.6l-0.6 7.4M537.1 342.5l9.3 0.4M545.2 344.7l0.7 6.5M558.7 343.7l0.2 9.4M568.4 342.8l0.7 7.5M574.9 342.5l5.7 -0.9M582.5 346.5l6.4 -0.4M582.5 346.5l0.1 5.8M588.6 346.1l8.3 0.7M588.6 346.1l-0.3 8.3M604.7 343.2l7.9 0.7M604.7 343.2l-1.1 6.7M611.4 343.0l8.2 0.7M621.5 342.5l6.9 0.5M626.2 344.9l8.3 -0.9M643.2 345.8l0.5 6.2M652.1 342.7l-0.3 5.9M658.2 344.4l1.4 6.9M664.6 342.7l5.6 -0.0M674.6 346.5l0.9 7.1M681.1 343.0l8.2 -1.4M701.9 345.6l8.1 -0.5M711.5 343.6l8.5 -0.7M711.5 343.6l-0.2 7.5M717.4 344.7l8.9 0.2M717.4 344.7l-0.4 8.9M725.4 342.5l0.5 5.5M732.4 342.8l7.6 -1.3M732.4 342.8l-0.4 7.6M747.9 342.7l7.1 -0.8M756.0 344.0l7.0 -1.3M282.1 350.8l8.4 -0.1M288.6 352.0l7.9 -0.3M288.6 352.0l1.4 9.2M297.4 351.0l6.8 -0.2M297.4 351.0l-0.4 9.4M303.6 351.8l8.8 0.8M303.6 351.8l0.9 6.1M313.8 353.9l6.1 1.0M321.5 353.1l0.4 7.7M336.9 353.4l5.7 -0.6M336.9 353.4l-0.2 6.0M342.1 353.1l8.0 1.1M342.1 353.1l-0.5 5.7M351.4 353.0l1.2 5.9M359.3 351.9l7.4 1.1M359.3 351.9l0.5 7.6M371.2 350.4l9.1 -1.3M371.2 350.4l-1.4 8.7M395.3 353.9l9.3 0.3M403.3 353.6l8.3 -0.1M403.3 353.6l-0.4 9.4M408.7 352.9l8.3 -0.0M408.7 352.9l1.1 9.5M416.4 350.9l6.4 1.1M416.4 350.9l1.3 6.1M423.8 351.8l9.1 -0.4M423.8 351.8l-0.6 7.6M448.3 353.0l7.1 -0.6M455.1 351.1l8.7 -1.2M463.8 353.0l0.4 7.1M469.9 350.8l8.4 1.1M476.8 353.9l8.0 1.5M476.8 353.9l0.5 6.1M485.8 350.5l8.6 -1.0M499.2 351.2l8.0 0.8M499.2 351.2l-1.4 8.1M514.1 352.6l6.2 -0.9M514.1 352.6l-1.4 7.4M521.6 352.1l6.0 0.1M521.6 352.1l1.3 8.3M532.4 351.1l6.0 0.6M544.8 353.5l1.1 9.4M561.6 352.3l8.0 -0.2M561.6 352.3l-0.5 8.8M567.8 352.1l8.8 0.1M576.8 350.3l-0.3 6.2M581.2 353.5l-0.1 6.7M589.7 353.3l8.5 -0.7M597.4 353.8l7.7 0.2M597.4 353.8l1.1 7.6M606.7 352.9l8.5 1.2M614.7 350.8l8.6 1.4M622.3 353.5l8.9 -0.3M626.8 351.6l-0.4 9.1M636.5 353.7l6.8 1.5M644.7 350.8l9.5 -0.5M644.7 350.8l0.8 9.2M649.5 351.6l8.2 0.6M663.8 351.4l7.3 -1.3M663.8 351.4l0.5 8.7M672.6 353.6l6.7 0.1M679.0 354.0l6.7 -0.9M704.8 352.8l-0.4 5.7M724.5 351.7l6.5 -0.9M724.5 351.7l0.9 7.4M739.8 350.1l9.5 -0.8M739.8 350.1l-1.3 8.5M749.0 353.4l9.2 1.5M753.6 353.9l7.8 -0.4M283.5 357.9l8.4 -0.4M288.8 361.0l7.3 0.5M288.8 361.0l1.1 8.9M299.5 358.3l5.7 -0.6M306.1 359.8l7.9 -1.5M306.1 359.8l0.8 7.3M311.7 359.2l8.2 0.8M311.7 359.2l0.3 7.1M327.9 360.3l7.6 -0.9M327.9 360.3l-1.5 6.6M342.1 360.7l8.1 0.9M351.3 359.8l-1.3 6.7M363.8 359.3l-1.1 7.2M371.6 357.5l6.1 -0.4M387.9 360.5l6.4 0.0M394.6 360.7l8.2 -1.3M394.6 360.7l-0.5 6.3M402.4 360.0l9.2 0.4M402.4 360.0l-0.8 8.8M409.5 361.1l5.9 -0.0M431.3 361.1l8.0 0.9M447.7 361.0l-1.5 8.8M491.6 361.1l5.6 -0.4M491.6 361.1l1.2 6.8M500.9 361.2l6.2 0.7M514.1 360.6l6.1 -1.1M514.1 360.6l-0.0 5.9M531.0 360.0l8.7 0.9M538.1 357.8l6.9 1.3M538.1 357.8l1.2 9.3M553.3 358.5l7.7 0.1M559.4 359.3l8.2 0.5M559.4 359.3l-1.0 5.7M566.0 361.3l1.0 6.0M583.0 358.3l9.4 0.7M592.2 358.4l6.4 -0.6M605.6 358.3l-0.9 7.7M611.7 359.4l1.3 7.4M618.6 358.0l7.9 0.9M618.6 358.0l-0.6 9.0M636.5 358.3l9.4 -0.8M644.0 360.2l5.5 0.4M665.1 358.7l8.2 0.4M665.1 358.7l-1.0 6.9M673.2 357.9l9.0 -0.5M673.2 357.9l-1.2 7.6M679.1 357.7l7.4 0.3M679.1 357.7l-0.8 9.0M697.0 359.6l9.0 0.7M697.0 359.6l-0.6 6.2M702.5 361.5l7.5 1.1M702.5 361.5l-0.6 7.4M709.9 358.6l-0.9 5.7M717.2 359.4l5.5 0.3M724.0 359.2l7.7 0.0M731.6 359.3l7.9 -0.7M749.7 360.4l7.1 0.0M755.7 361.3l5.5 1.1M284.9 368.1l7.4 -1.1M284.9 368.1l1.0 7.1M290.0 368.8l5.8 -1.2M303.6 365.7l0.8 5.8M312.1 365.7l6.2 -0.7M322.4 368.2l-0.6 7.6M329.1 368.8l8.0 -0.0M335.1 365.3l9.4 -1.0M344.8 366.9l9.1 -0.4M344.8 366.9l-1.1 7.0M351.8 368.5l8.3 -0.7M356.9 368.6l6.3 -1.2M356.9 368.6l1.3 8.2M366.0 366.6l1.1 6.1M373.3 366.5l-1.3 8.3M389.0 366.0l0.8 8.5M393.8 366.2l9.3 -0.2M393.8 366.2l1.4 9.4M410.2 366.3l6.4 -1.5M410.2 366.3l-0.7 6.0M418.0 365.6l6.7 -1.0M418.0 365.6l0.7 6.6M424.9 366.2l6.3 -0.9M424.9 366.2l-0.5 8.5M432.6 368.3l8.0 -0.4M432.6 368.3l0.2 6.8M440.4 367.9l7.9 1.3M464.5 368.7l5.8 -1.3M469.9 366.0l6.3 0.4M469.9 366.0l0.4 8.4M476.7 366.1l7.3 0.2M486.2 366.9l7.4 -0.0M486.2 366.9l0.7 6.8M494.9 367.3l9.5 1.3M498.5 369.0l0.0 9.0M506.1 365.5l8.5 -0.9M514.7 366.0l-0.9 8.1M522.8 367.6l7.4 -1.0M522.8 367.6l-0.9 8.8M529.5 365.3l7.1 0.6M538.2 367.1l-0.9 5.6M544.8 367.7l6.9 1.5M544.8 367.7l-0.8 7.7M551.2 365.6l8.1 -0.4M551.2 365.6l-1.0 5.8M560.3 368.0l8.4 1.0M566.5 368.9l7.6 0.6M566.5 368.9l-0.7 8.0M573.8 365.8l-0.1 8.9M590.4 366.7l6.0 1.5M590.4 366.7l-1.0 8.9M605.0 368.1l5.5 -0.6M605.0 368.1l1.1 9.2M619.3 365.3l7.9 -0.6M619.3 365.3l0.0 7.6M629.6 368.8l-1.1 7.2M633.7 366.8l9.2 1.3M642.4 365.8l8.1 -1.4M642.4 365.8l-0.7 7.1M649.6 367.5l-1.2 7.7M658.4 368.2l6.8 0.5M658.4 368.2l-0.7 8.0M665.6 368.4l7.0 -1.2M680.0 366.5l7.8 0.1M687.5 365.3l0.3 8.6M702.9 366.5l8.8 1.1M711.8 366.9l1.3 8.5M724.1 365.6l7.9 -0.3M732.7 366.5l6.8 1.0M738.7 365.6l7.2 -1.0M738.7 365.6l-0.1 8.9M747.9 365.2l8.9 1.3M756.3 366.1l1.3 7.9M290.2 373.2l-1.2 7.6M307.1 373.0l6.7 0.2M307.1 373.0l-0.4 8.0M311.1 374.6l-1.2 8.3M326.7 375.1l8.2 -1.0M337.3 375.7l6.7 -1.4M344.4 374.8l6.1 1.0M350.2 373.2l7.9 1.4M350.2 373.2l-1.3 8.5M363.8 375.0l7.3 0.7M363.8 375.0l-0.5 5.7M373.7 373.7l5.6 0.4M373.7 373.7l0.2 7.2M378.8 374.7l6.6 -0.6M378.8 374.7l0.9 8.7M387.8 374.6l6.9 0.6M393.9 376.5l8.4 0.5M393.9 376.5l0.9 9.2M409.0 372.6l6.1 -1.3M417.7 372.9l6.5 1.5M426.4 376.1l1.1 7.9M441.4 373.1l7.3 1.3M441.4 373.1l1.4 6.4M448.4 375.3l6.4 -0.5M456.6 373.3l0.8 8.3M469.3 375.5l7.5 1.1M469.3 375.5l-0.6 9.4M486.6 372.6l8.8 -0.0M486.6 372.6l-0.1 9.2M502.4 373.0l5.5 -0.7M507.0 376.4l9.0 0.7M507.0 376.4l0.3 9.4M524.2 374.3l8.9 -0.0M524.2 374.3l-1.5 6.1M529.1 375.4l6.9 -1.4M544.1 373.7l9.5 -0.8M560.0 375.2l0.7 7.1M567.9 373.8l9.4 0.3M567.9 373.8l-0.6 7.9M574.7 374.5l7.6 -1.3M574.7 374.5l0.7 7.5M584.5 376.1l9.4 -0.4M584.5 376.1l1.2 8.8M589.7 375.8l8.7 0.3M589.7 375.8l0.6 9.1M597.0 375.9l7.9 0.7M597.0 375.9l0.6 9.0M606.3 376.1l8.5 -0.2M606.3 376.1l1.0 5.5M612.4 373.0l9.0 -0.1M620.3 375.1l6.0 0.1M620.3 375.1l0.8 6.1M627.4 374.9l5.9 0.5M627.4 374.9l1.3 8.8M634.1 372.7l6.8 -0.1M648.9 374.3l8.9 1.3M673.2 372.5l-1.3 7.2M687.9 374.0l7.7 -0.2M687.9 374.0l1.1 8.6M697.5 375.8l8.9 1.4M697.5 375.8l-1.2 7.1M708.9 373.7l6.0 1.1M708.9 373.7l0.4 9.4M717.0 375.9l-0.0 6.9M732.9 376.2l-0.8 6.5M740.5 375.5l0.7 9.3M746.6 373.0l6.4 0.3M746.6 373.0l1.2 6.4M753.6 376.4l8.1 0.9M284.5 381.7l0.1 8.5M291.4 380.1l7.7 0.8M291.4 380.1l-1.4 7.2M299.8 381.7l8.1 1.3M299.8 381.7l-0.6 6.7M306.7 380.8l6.9 0.0M306.7 380.8l0.9 9.0M314.8 381.9l7.3 -0.6M314.8 381.9l-1.1 7.4M329.9 381.6l8.1 -1.3M334.5 382.7l1.0 5.8M357.3 380.7l6.7 -0.9M363.9 383.0l9.2 0.3M363.9 383.0l-0.7 9.1M374.2 382.2l7.0 -1.5M381.4 381.4l0.3 8.4M386.3 383.7l9.1 1.0M394.6 380.3l9.3 -0.6M394.6 380.3l-0.2 6.2M404.3 382.3l8.3 -1.1M404.3 382.3l0.7 6.6M410.0 383.9l8.8 0.8M417.1 380.5l0.2 6.4M433.3 381.1l0.0 8.8M439.2 381.1l7.9 -0.8M439.2 381.1l0.9 9.0M446.1 383.7l0.6 7.6M461.4 382.1l7.6 -1.4M461.4 382.1l-1.0 7.5M471.6 382.3l5.7 -1.4M478.3 382.3l9.1 1.3M478.3 382.3l-0.5 7.8M484.3 380.4l6.0 -1.2M501.8 382.2l-1.0 7.8M514.4 382.1l7.2 1.2M521.2 382.2l6.1 1.3M528.7 382.4l0.0 6.9M536.4 381.8l7.8 -0.1M536.4 381.8l1.3 8.2M544.4 381.3l8.4 -0.4M552.3 382.0l5.9 -0.5M559.6 383.2l7.2 0.2M566.2 381.6l8.6 1.1M566.2 381.6l0.6 6.7M574.1 380.6l-0.7 5.6M585.0 381.3l0.5 6.0M591.8 380.9l8.4 0.6M598.2 380.7l6.2 -1.2M598.2 380.7l-0.4 8.8M605.8 380.8l6.0 0.8M614.5 382.7l7.1 -1.0M614.5 382.7l0.3 6.9M620.8 381.1l6.8 -1.2M628.2 383.7l7.3 -0.1M628.2 383.7l1.3 8.2M634.5 381.6l1.3 7.0M644.4 382.7l6.3 0.2M650.0 381.0l6.1 -0.5M656.3 381.7l5.8 -0.0M665.7 383.8l8.7 -1.1M671.0 383.4l-1.4 6.2M686.7 382.9l5.8 0.5M686.7 382.9l1.5 7.1M694.8 381.6l7.3 1.4M704.2 380.7l6.9 -1.3M704.2 380.7l1.2 7.4M723.6 382.5l5.8 0.9M723.6 382.5l-0.5 6.2M733.3 380.9l0.7 6.1M749.4 380.1l5.7 -1.0M756.3 380.5l8.3 0.0M284.5 391.2l6.5 -1.1M290.0 388.1l1.0 6.0M297.1 387.6l-0.8 5.6M305.2 388.0l6.2 -0.7M305.2 388.0l0.2 5.9M313.6 391.1l9.2 -0.5M313.6 391.1l-0.1 9.3M321.4 389.4l7.8 -0.3M321.4 389.4l0.8 7.7M328.7 391.1l0.4 7.5M334.1 387.6l0.5 6.7M345.0 390.6l7.1 0.1M352.3 388.7l7.3 -0.8M360.0 389.6l8.3 0.7M371.7 388.8l5.5 0.3M371.7 388.8l1.1 9.3M380.0 389.7l6.4 -0.4M380.0 389.7l1.4 5.7M397.5 391.4l6.2 -0.2M397.5 391.4l1.1 7.7M403.7 389.2l-1.2 7.5M410.8 388.5l9.1 0.9M410.8 388.5l-1.1 6.2M419.3 389.6l6.5 -1.3M425.7 390.5l8.0 -0.5M425.7 390.5l1.1 9.2M431.7 390.2l0.9 7.2M439.2 389.7l1.3 6.3M454.6 390.4l5.7 -1.4M461.1 389.7l6.1 0.2M461.1 389.7l1.0 6.3M470.6 391.1l0.6 6.2M479.7 388.1l7.4 -0.0M479.7 388.1l-0.3 5.6M486.5 390.0l8.9 -0.6M486.5 390.0l-1.1 5.6M493.7 387.6l8.5 0.6M493.7 387.6l-0.4 9.4M507.9 389.6l1.4 7.7M515.5 389.9l9.5 -1.1M530.8 388.5l6.4 -0.1M552.9 387.8l-0.2 8.4M569.2 388.4l7.3 1.2M569.2 388.4l-0.8 9.1M574.4 388.1l6.9 -0.3M574.4 388.1l0.8 8.3M581.7 390.8l0.9 7.6M589.9 391.1l1.1 5.6M597.8 388.1l8.0 -1.2M597.8 388.1l-0.1 7.2M614.4 389.7l9.2 0.9M614.4 389.7l-0.3 6.2M621.7 390.8l5.6 -0.5M621.7 390.8l0.9 6.2M629.0 390.7l8.0 -1.0M637.0 390.4l8.5 0.4M644.0 391.0l7.0 -0.6M649.9 388.4l9.1 0.3M666.7 389.2l9.0 -0.8M666.7 389.2l-0.9 7.5M674.1 390.9l6.8 -0.8M686.7 390.1l0.3 5.8M696.5 388.5l5.7 -1.4M703.9 387.8l6.9 -0.5M717.5 390.7l9.1 0.8M717.5 390.7l1.3 8.1M724.0 390.1l8.6 0.7M747.7 389.3l6.3 1.0M291.3 397.8l5.8 0.4M291.3 397.8l0.6 6.3M296.3 398.8l6.6 -0.3M303.9 395.6l7.8 1.3M311.0 395.5l-0.3 6.8M319.3 398.7l8.6 -0.7M335.9 398.5l8.9 0.0M357.2 396.3l-1.4 5.9M365.1 398.3l-1.2 8.6M371.3 399.0l-1.0 6.1M386.8 396.3l7.2 1.0M386.8 396.3l1.0 6.1M395.7 396.3l6.2 0.7M401.7 395.8l5.8 0.4M408.7 396.5l-1.4 7.1M418.2 397.9l5.7 0.4M425.5 396.7l7.1 -1.1M434.0 396.1l0.4 6.9M441.5 397.5l9.2 -0.3M447.8 395.2l1.2 6.6M455.5 395.8l6.1 -1.2M455.5 395.8l0.8 8.3M461.8 397.2l6.3 -1.0M485.4 396.9l8.8 0.0M485.4 396.9l-0.1 7.6M509.5 396.4l1.0 5.9M514.4 398.7l6.3 -0.9M522.2 395.8l8.0 0.6M529.7 395.5l0.5 6.3M539.3 396.7l1.3 9.3M547.0 397.1l0.6 7.1M562.1 398.4l7.2 -0.8M567.0 397.8l6.1 -0.2M575.2 398.5l9.0 -1.4M575.2 398.5l-0.1 7.1M582.7 398.2l-0.5 9.0M589.5 395.6l5.7 0.5M589.5 395.6l-0.5 8.0M598.0 395.4l8.9 1.4M598.0 395.4l-1.0 7.4M611.3 398.7l9.4 -1.4M611.3 398.7l1.2 8.0M620.6 397.9l1.1 8.4M627.2 398.4l7.1 0.2M644.0 397.7l-0.1 7.4M652.4 396.4l8.9 1.4M659.1 395.5l0.7 8.8M665.4 397.8l6.5 -0.3M674.2 395.9l6.3 -0.1M674.2 395.9l-1.5 7.0M681.9 396.7l-0.8 9.4M689.7 395.4l7.9 0.2M696.9 398.1l7.2 -1.1M704.3 396.0l8.4 -1.3M710.1 395.9l9.1 0.7M717.6 396.2l6.6 0.2M717.6 396.2l1.3 6.3M726.7 396.5l7.9 -0.8M740.4 395.7l6.8 -0.3M749.1 398.0l0.9 9.0M755.1 398.0l7.6 -0.2M755.1 398.0l1.4 8.9M284.6 403.4l6.2 -0.4M296.7 403.5l0.3 6.0M303.6 406.4l8.4 0.7M314.7 406.3l5.8 1.4M322.3 405.4l0.2 6.5M329.9 405.7l5.9 0.6M329.9 405.7l1.4 5.8M335.7 406.2l9.2 0.4M335.7 406.2l1.2 8.3M343.5 404.9l6.1 -0.6M343.5 404.9l1.2 8.9M351.6 403.4l5.7 0.5M373.5 405.3l6.1 -0.2M373.5 405.3l1.0 7.8M380.3 402.9l6.5 0.3M380.3 402.9l-1.1 7.3M387.0 404.8l-1.4 6.8M394.1 404.7l7.8 -1.5M411.0 403.2l7.3 -0.9M419.3 403.5l7.2 0.0M427.0 403.3l8.7 1.4M427.0 403.3l0.7 8.8M432.4 403.6l0.2 9.1M441.5 402.5l-1.1 7.6M446.7 404.9l7.8 1.4M446.7 404.9l-0.9 6.5M454.8 406.1l8.2 -0.0M454.8 406.1l0.7 8.0M464.3 405.9l1.0 6.9M469.5 403.0l6.5 0.9M469.5 403.0l-0.9 6.2M478.9 404.9l0.9 7.5M492.2 402.9l8.9 0.7M499.5 405.0l6.6 -0.9M499.5 405.0l-0.8 7.3M508.0 404.2l7.4 0.1M514.8 405.9l9.1 -0.7M514.8 405.9l-1.0 7.5M531.5 405.1l7.9 0.1M531.5 405.1l1.1 8.8M538.9 403.1l5.5 0.3M538.9 403.1l-0.3 9.4M552.7 405.4l5.6 0.0M561.8 403.1l-1.3 8.1M568.3 404.8l-0.9 6.3M575.3 403.0l6.4 0.0M591.7 404.4l8.1 0.1M605.7 406.2l7.6 0.2M614.7 406.3l6.9 1.3M620.8 403.4l-1.4 8.0M627.8 404.2l8.4 -0.7M627.8 404.2l-0.3 6.5M633.6 404.9l7.3 -1.4M644.9 406.3l8.0 -0.8M644.9 406.3l-1.4 9.2M649.4 403.9l8.2 -0.7M656.3 403.6l0.1 7.2M664.6 403.0l0.8 7.6M674.3 406.2l-0.5 7.2M689.9 404.9l8.5 -1.3M702.9 403.4l0.7 9.4M712.1 406.3l8.6 -0.4M718.2 403.8l7.8 -0.9M718.2 403.8l-1.5 6.9M732.3 403.5l6.3 1.3M732.3 403.5l-0.4 6.8M739.3 403.5l7.1 1.0M739.3 403.5l-1.0 7.1M747.6 404.4l8.0 0.1M754.1 404.9l5.6 -0.6M281.6 411.6l-1.4 8.4M291.9 412.1l8.3 1.3M298.1 413.6l0.6 8.3M306.5 410.8l7.0 -0.4M313.4 410.4l8.7 -1.1M313.4 410.4l0.5 5.9M320.5 413.3l8.2 -1.1M320.5 413.3l0.9 7.9M329.9 410.7l6.2 1.0M329.9 410.7l0.4 8.2M343.2 410.4l6.7 0.3M351.9 412.6l6.9 -1.4M351.9 412.6l0.6 5.8M372.0 411.0l5.8 0.5M372.0 411.0l-0.0 8.3M379.7 413.0l6.2 -0.7M379.7 413.0l0.6 6.7M388.8 410.4l6.5 1.0M388.8 410.4l-1.2 5.8M395.9 410.6l-0.5 8.7M410.1 412.5l7.4 0.3M410.1 412.5l-0.6 8.9M417.5 411.1l8.9 -0.6M417.5 411.1l1.2 8.4M424.4 412.2l-0.5 8.5M434.4 412.9l5.8 -1.0M434.4 412.9l0.9 7.9M449.3 412.6l7.7 -1.2M449.3 412.6l0.8 8.3M469.3 412.7l9.3 -0.8M469.3 412.7l-0.2 5.8M478.4 412.8l9.4 0.4M478.4 412.8l-1.4 6.4M486.2 411.7l8.7 1.1M499.3 410.8l8.7 -0.8M499.3 410.8l-0.0 6.8M506.3 412.2l1.2 9.2M515.1 410.6l7.5 -1.1M515.1 410.6l-0.3 7.6M523.4 413.1l6.3 0.3M536.2 412.2l1.4 6.6M545.8 412.5l6.5 -1.4M554.7 413.4l8.5 -0.7M560.3 413.7l9.1 1.2M568.6 412.6l9.3 -0.8M581.1 411.8l-0.8 7.4M598.8 412.7l-0.5 8.7M604.8 413.6l8.2 0.9M614.2 412.0l9.1 -1.0M621.5 410.7l-1.2 8.5M635.3 413.0l6.1 -1.5M635.3 413.0l-1.3 6.0M644.7 410.8l5.5 -0.1M650.8 412.9l8.2 -0.2M650.8 412.9l1.5 7.4M659.7 413.6l-1.1 8.6M667.3 410.3l0.2 8.8M673.2 411.6l8.6 0.2M673.2 411.6l-1.4 7.3M678.9 413.9l5.7 0.6M687.6 410.6l8.4 -0.6M687.6 410.6l1.3 6.5M695.4 410.7l6.0 0.2M712.1 410.9l7.1 0.3M719.2 412.5l0.9 7.1M725.3 413.8l5.5 -0.8M725.3 413.8l0.1 7.3M738.7 412.4l6.2 0.2M738.7 412.4l-0.1 7.5M749.7 413.5l5.7 -0.6M749.7 413.5l-1.1 8.7M756.6 411.4l-1.5 8.7M283.5 421.1l5.7 1.1M283.5 421.1l0.4 8.6M292.3 418.5l7.6 -0.5M299.4 419.5l1.1 6.6M307.4 421.3l8.7 -1.1M314.0 420.5l6.7 1.4M314.0 420.5l0.9 8.0M321.9 419.3l7.4 -0.8M329.2 418.7l6.2 -1.3M329.2 418.7l0.2 6.0M334.7 418.9l0.9 8.8M342.9 419.3l6.4 -0.7M364.0 419.8l0.8 7.2M382.2 421.3l0.1 9.1M389.0 420.4l5.7 0.7M389.0 420.4l0.2 7.7M404.6 420.5l-1.1 8.6M408.7 417.6l-0.7 8.9M419.0 419.2l1.1 8.1M423.7 420.1l-0.4 6.5M432.2 418.6l8.3 0.8M432.2 418.6l-0.9 6.2M454.0 417.9l8.7 0.3M472.3 419.2l9.4 1.0M477.8 420.6l5.9 -0.3M477.8 420.6l0.2 8.9M492.4 420.5l6.7 0.1M500.5 419.6l-0.3 7.0M506.4 420.9l7.3 -0.3M515.7 420.4l7.6 -0.2M515.7 420.4l1.3 9.3M531.6 420.5l9.5 -0.1M538.5 419.9l-0.6 9.0M561.3 419.9l6.4 0.2M574.2 419.3l-0.5 7.0M599.0 418.0l-1.0 8.4M612.1 420.5l-0.2 8.3M622.0 420.3l-0.4 9.1M635.7 420.5l1.4 9.0M641.7 420.1l1.2 6.6M650.1 419.8l9.4 -0.9M650.1 419.8l-0.3 7.3M665.4 420.3l7.5 1.3M665.4 420.3l-0.5 6.4M674.1 421.1l9.1 0.6M674.1 421.1l-1.2 5.6M682.4 419.4l5.9 -1.0M682.4 419.4l-1.0 8.0M686.3 421.1l9.2 -1.0M695.9 419.9l7.3 -1.5M701.8 419.1l6.5 0.3M701.8 419.1l1.4 6.7M711.8 417.7l5.7 0.8M719.1 419.5l7.7 1.0M726.2 419.3l7.0 -0.8M726.2 419.3l-1.3 7.2M742.4 420.1l0.4 8.6M749.5 420.0l5.5 0.8M753.7 418.5l0.1 6.7" stroke="#d8dce2" stroke-width="0.75" fill="none"/>
<path d="M490.6 363.2l11.7 10.0M509.1 332.4l33.3 8.9M453.4 155.3l27.3 24.2M383.3 400.7l-21.9 4.3M373.3 107.6l27.9 2.7M743.8 163.6l5.0 30.7M724.8 393.6l-24.1 14.9M686.2 343.4l-24.4 14.4M342.1 247.5l9.2 26.5M650.1 389.9l-20.5 6.7M336.4 143.2l-25.4 5.0M710.3 365.3l13.9 8.9M327.2 409.8l22.0 12.9M520.5 110.6l-32.3 10.0M633.9 187.8l-10.7 32.2M638.5 183.0l46.1 0.2M582.5 177.7l4.6 18.4M452.7 111.5l-27.0 28.0M709.2 343.7l-20.2 10.2M346.9 234.2l41.0 15.9M372.3 176.1l-3.7 26.8M550.7 382.7l11.6 13.9M726.5 108.9l7.9 30.8M456.7 240.3l13.6 24.6M285.0 415.2l-38.2 20.1M606.2 255.0l-27.9 20.8M461.7 368.4l7.7 28.0M434.2 182.4l7.3 18.0M462.7 299.9l-20.9 4.7M757.9 384.4l15.9 27.3M521.7 227.9l-13.1 40.7M699.5 252.6l-0.2 17.3M662.8 358.6l37.0 22.7M573.3 276.9l40.3 7.6M363.0 253.7l-24.7 7.5M635.9 351.6l-11.5 25.2M600.3 194.2l13.9 22.6M662.4 303.5l23.6 27.8M428.6 328.3l22.0 8.1M558.7 397.6l38.5 29.8M364.8 103.2l4.9 27.8M756.6 143.1l-38.5 21.6M682.5 412.2l-18.7 20.2M756.5 199.5l-31.1 38.7M450.9 218.2l9.2 29.7M597.9 238.9l7.2 17.7M326.8 212.3l34.1 0.5M630.3 402.3l-4.9 20.8M289.0 135.8l26.0 1.0M280.6 204.7l-16.1 23.8M608.7 223.6l9.3 30.4M349.2 195.4l-26.7 8.2M750.4 352.0l-30.1 7.1M288.8 127.2l13.3 20.7M663.6 417.0l-26.2 13.2M442.2 359.2l3.6 31.4M552.3 135.0l-31.9 16.2M581.7 188.0l26.6 7.5M303.0 327.5l39.4 11.5M424.1 351.2l-18.6 35.8M595.3 214.0l5.8 22.1M720.3 165.8l19.2 22.2M561.2 311.1l-20.6 44.0M508.8 113.1l-33.4 13.4M687.8 401.1l14.4 7.8M649.0 370.0l27.7 26.5M651.2 190.6l-27.2 38.9M475.9 346.7l17.2 11.2M278.0 137.4l-17.7 3.9M496.2 230.5l15.0 6.5M416.7 259.8l9.7 40.9M757.2 94.4l22.7 12.1M601.3 283.6l-17.6 12.4M543.1 102.4l25.9 11.9M686.7 288.6l36.0 16.9M354.7 110.7l-17.6 29.5M600.9 265.9l28.7 7.2M709.7 295.9l27.0 29.4M575.3 413.5l-25.5 24.2M523.0 95.5l5.0 15.9M647.0 333.7l-15.5 12.8M332.2 353.6l13.4 34.3M358.1 173.6l43.4 9.5M669.7 292.1l8.6 40.7M599.8 125.4l31.7 14.0M291.2 415.9l11.7 34.8M288.5 279.5l7.2 18.3M717.0 339.2l-21.8 29.7M618.1 92.4l-23.4 29.1M502.8 105.1l20.0 44.0M401.9 144.0l19.9 19.2M500.4 214.3l-14.1 16.8M684.4 114.8l13.8 46.3M365.4 277.5l33.0 21.6M403.1 294.3l12.5 17.2M665.3 112.7l-43.4 1.0M395.0 306.4l-5.6 30.5M485.2 417.9l27.3 33.3M711.6 289.1l25.0 29.6M669.8 189.8l2.0 16.4M656.3 351.5l-0.7 22.5M569.0 106.2l16.5 14.2M753.8 340.0l29.8 12.7M507.7 363.9l-39.7 1.0M483.3 272.3l-9.9 27.5M496.7 329.2l-23.1 43.6M305.4 101.9l-30.7 1.8M555.5 331.4l-5.6 47.7M569.5 290.1l6.6 15.7M516.7 377.7l8.1 14.1M547.5 244.9l11.1 31.6M381.7 291.0l33.8 6.4M515.5 313.9l-43.6 15.9M622.4 341.9l-14.0 29.5M619.8 350.4l45.6 7.3M722.1 138.8l31.6 16.7M499.2 156.3l47.3 14.1M676.9 405.4l1.3 33.1M372.4 348.1l-36.9 16.4M385.9 389.6l-2.1 25.0M681.7 297.3l-47.1 6.2M657.9 143.4l25.2 15.0M569.4 94.5l28.6 23.1M554.5 176.4l-22.7 20.6M398.2 102.5l-46.4 8.1M663.3 142.1l-37.1 18.0M292.3 357.5l8.8 23.3M399.6 187.6l-45.5 7.1M612.1 259.0l16.9 3.8M363.6 292.4l19.1 31.4M332.2 314.6l12.7 29.1M502.3 258.9l13.7 18.1M591.5 153.9l-27.6 1.7M706.1 325.9l29.3 24.5M491.6 287.4l-13.3 41.1M320.8 387.6l29.3 8.8M569.3 314.6l28.9 38.4M458.6 317.5l22.8 26.5M719.5 286.0l47.1 14.0M438.9 141.9l-48.5 3.2M469.7 411.9l-39.6 11.6M672.8 97.3l-0.9 22.6M496.4 399.7l10.6 47.4M559.6 202.4l30.5 33.7M470.0 409.6l22.0 11.1M542.5 326.3l26.7 35.4M428.6 201.9l-41.7 24.6M513.3 403.3l-1.6 24.7M647.7 225.0l47.7 9.8M373.0 135.0l35.5 9.1M317.1 118.8l-43.2 8.2M723.1 286.2l-22.1 11.6M652.1 182.9l24.9 10.2M553.7 348.6l15.6 20.1M442.6 245.7l-35.7 34.8M333.7 127.5l19.4 26.0M337.3 162.0l-11.6 26.5M548.6 289.5l-19.7 26.7M326.3 109.4l15.4 1.3M329.9 193.8l23.8 43.3M663.3 180.3l-19.9 0.4M708.1 284.1l-28.3 14.8M487.0 402.9l-12.1 18.8M297.9 398.2l-28.8 10.4M356.0 256.6l-6.7 29.0M543.5 321.1l-26.2 33.5M421.6 154.4l30.8 3.8M643.0 94.3l30.8 20.9M595.9 248.2l-8.0 17.5M439.3 210.6l10.2 45.9M453.8 369.1l-2.0 30.3M590.1 96.9l-7.1 28.8M368.0 365.1l4.9 30.1M689.8 312.4l-33.6 2.4M371.1 301.3l1.1 32.7M615.7 417.4l28.8 7.6M344.6 305.5l-10.3 38.3M439.0 392.0l38.6 31.3M680.9 129.8l-28.6 4.5M727.4 288.0l14.7 7.3M547.2 100.1l-21.1 33.4M581.0 382.3l20.2 9.2M599.5 125.6l13.2 18.8M447.6 406.9l-17.8 26.6M674.5 145.8l37.8 18.0M737.7 394.0l19.4 14.5M691.4 146.4l13.7 7.8M330.3 232.5l37.1 19.3M590.1 398.1l24.1 12.7M405.5 372.1l-5.9 26.6M557.3 244.2l36.4 31.1M677.1 179.8l14.7 21.5M554.5 127.3l5.1 24.2M531.7 164.7l30.4 34.6M547.1 157.7l-12.4 14.9M383.3 291.4l16.6 15.9M630.8 232.0l-25.5 35.8M655.5 240.3l-10.5 23.8M472.2 174.0l12.2 9.6M487.5 198.8l-10.2 39.6M306.3 136.5l9.6 12.7M659.7 319.8l4.0 38.6M358.2 388.5l23.7 38.3M552.2 123.7l29.6 4.7M332.6 125.2l-12.3 32.6M483.4 408.0l-17.1 5.7M700.7 207.4l42.7 20.9M310.4 141.7l12.4 35.5M686.2 265.3l11.7 46.6M388.4 235.1l6.4 24.3M666.1 380.7l-43.4 16.4M618.9 115.2l16.2 15.4M690.9 197.6l-35.5 7.1M410.4 344.6l21.3 26.1M462.7 383.6l-3.3 27.4M284.5 196.3l29.8 17.1M639.8 139.1l-25.5 0.1M674.8 224.3l-45.8 16.8M298.0 96.7l-14.9 6.1M293.3 94.7l-24.7 24.8M674.6 417.5l3.8 32.1M428.8 364.5l16.7 6.3M360.1 333.4l12.9 40.8M398.2 250.0l12.6 11.5M345.0 403.8l-29.5 4.1M358.3 215.8l-32.9 1.4M351.2 417.2l-44.3 10.0M414.2 283.3l-29.8 32.8M591.2 229.4l-13.6 20.2M501.0 133.2l44.6 11.8M496.2 327.5l-24.9 43.1M345.5 380.9l-19.4 21.1M723.4 301.8l21.3 8.6M300.5 253.6l-20.1 10.6M687.3 116.7l34.8 5.0M365.3 268.8l19.8 19.7M434.2 191.6l0.6 27.6M759.8 375.0l45.0 7.4M679.7 370.7l-45.9 15.0M390.5 97.2l44.7 12.0M596.5 167.2l9.5 42.0M369.6 168.2l6.1 19.7M362.9 98.4l1.2 47.9M634.5 199.7l-18.8 8.6M487.2 328.4l8.1 20.1M344.0 201.9l-45.5 0.8M425.0 319.0l8.7 20.3M366.1 312.6l-4.5 25.1M392.5 335.5l13.4 19.0M438.3 317.8l-24.3 9.5M331.5 405.7l-38.3 15.6M518.4 389.0l-44.1 15.2M695.3 213.7l-27.3 26.7M534.7 125.0l-39.0 1.3M512.6 156.4l15.3 24.5M568.1 229.8l-21.4 19.7M610.6 124.6l-20.8 4.9M579.2 130.8l-39.0 25.9M557.5 250.1l-9.7 25.4M511.8 408.6l15.8 41.8" stroke="#cdd2da" stroke-width="0.8" fill="none"/>
<path d="M288 193 L360 190 L430 194 L528 194" stroke="#e3e6ea" stroke-width="2.4" fill="none"/>
<path d="M288 245 L330 240 L365 236" stroke="#e3e6ea" stroke-width="2.4" fill="none"/>
<path d="M290 130 L360 150 L420 170 L500 180" stroke="#e3e6ea" stroke-width="2.4" fill="none"/>
<path d="M430 108 L445 180 L470 221" stroke="#e3e6ea" stroke-width="2.4" fill="none"/>
<path d="M520 108 L540 150 L545 221" stroke="#e3e6ea" stroke-width="2.4" fill="none"/>
<path d="M288 300 L330 310 L365 330" stroke="#e3e6ea" stroke-width="2.4" fill="none"/>
<path d="M300 420 L320 380 L330 345" stroke="#e3e6ea" stroke-width="2.4" fill="none"/>
<path d="M365 395 L420 380 L470 372" stroke="#e3e6ea" stroke-width="2.4" fill="none"/>
<path d="M570 250 L620 250 L690 240 L762 230" stroke="#e3e6ea" stroke-width="2.4" fill="none"/>
<path d="M590 260 L600 300 L605 330" stroke="#e3e6ea" stroke-width="2.4" fill="none"/>
<path d="M690 260 L740 300 L762 310" stroke="#e3e6ea" stroke-width="2.4" fill="none"/>
<path d="M740 108 L730 160 L700 220" stroke="#e3e6ea" stroke-width="2.4" fill="none"/>
<path d="M560 112 L620 150 L700 180 L762 190" stroke="#e3e6ea" stroke-width="2.4" fill="none"/>
<rect x="306" y="108.5" width="14" height="6" rx="3" fill="#c4ead0"/>
<rect x="338" y="145" width="8" height="8" rx="3" fill="#c4ead0"/>
<rect x="350" y="205" width="10" height="7" rx="3" fill="#c4ead0"/>
<rect x="296" y="226" width="16" height="14" rx="3" fill="#c4ead0"/>
<rect x="333" y="356" width="14" height="14" rx="3" fill="#c4ead0"/>
<rect x="386" y="373" width="12" height="8" rx="3" fill="#c4ead0"/>
<rect x="430" y="403" width="8" height="10" rx="3" fill="#c4ead0"/>
<rect x="505" y="178" width="16" height="16" rx="3" fill="#c4ead0"/>
<rect x="575" y="335" width="18" height="10" rx="3" fill="#c4ead0"/>
<rect x="664" y="322" width="20" height="20" rx="3" fill="#c4ead0"/>
<rect x="690" y="292" width="18" height="10" rx="3" fill="#c4ead0"/>
<rect x="738" y="158" width="16" height="14" rx="3" fill="#c4ead0"/>
<rect x="700" y="330" width="12" height="6" rx="3" fill="#c4ead0"/>
<path d="M507 421 L507 350 L569 348 L580 336 L640 319 L682 322 L710 331 L735 346 L740 362 L762 362 L762 421 Z" fill="#90daee"/>
<path d="M566 336 L582 334 L585 358 L579 372 L570 362 Z" fill="#f4f5f5"/>
<path d="M621 320 L646 318 L647 388 L639 393 L633 380 L622 374 Z" fill="#dcefe2"/>
<rect x="624" y="326" width="19" height="7" fill="#90daee"/>
<path d="M547 357 L560 352 L586 398 L583 411 L573 411 L547 368 Z" fill="#c4ead0"/>
<path d="M580 395 L602 388 L614 404 L606 412 L588 412 Z" fill="#c4ead0"/>
<path d="M507 421 L509 395 L516 376 L521 377 L514 400 L513 421 Z" fill="#f2ede2"/>
<path d="M667 321 L700 329 L704 339 L670 336 Z" fill="#c4ead0"/>
<path d="M700 331 L762 326 L762 385 L746 387 L735 373 L728 359 L706 353 Z" fill="#f4f5f5"/>
<path d="M560 392 Q600 380 660 392" stroke="#6fb9d3" stroke-width="0.8" stroke-dasharray="2 1.5" fill="none"/>
<path d="M470 385 L485 388 L480 396 L468 392 Z M486 402 L494 398 L492 412 L484 414 Z" fill="#90daee"/>
<path d="M622 296 L648 300 L647 314 L630 316 L622 308 Z" fill="#90daee"/>
<path d="M570 315 L583 318 L582 333 L570 334 Z" fill="#90daee"/>
<path d="M603 278 L610 280 L609 292 L603 292 Z" fill="#90daee"/>
<path d="M611.7 98 L624 120 L641 150 L664 177 L675 197 L676 212 L670 226 L664.5 247 L660 280 L659 322" stroke="#90daee" stroke-width="11" fill="none" stroke-linejoin="round"/>
<path d="M676 212 L670 226 L664.5 247 L660 280 L659 322" stroke="#7fc3dc" stroke-width="0.7" fill="none" transform="translate(5,0)"/>
<path d="M570 112 L590 116 L603 126 L597 151 L592 168 L578 190 L564 208 L549 219 L540 230" stroke="#90daee" stroke-width="5" fill="none" stroke-linejoin="round"/>
<path d="M680 98 L681.5 122.2 L676.8 128.4 L670.6 131.5 L672 139.3 L664.3 145.6 L656.5 150.2 L653.4 153.4 L651.8 161.2 L648 168" stroke="#90daee" stroke-width="2.8" fill="none" stroke-linejoin="round"/>
<path d="M688 98 L698.6 128.4 L705 141 L712 155 L720 175 L727 200 L729 240" stroke="#90daee" stroke-width="2.6" fill="none"/>
<path d="M725 250 L730 275 L727 305 L715 325" stroke="#90daee" stroke-width="3" fill="none"/>
<path d="M742 140 L752 160 L762 176" stroke="#90daee" stroke-width="4.5" fill="none"/>
<path d="M727 248 L745 243 L762 238" stroke="#90daee" stroke-width="2.5" fill="none"/>
<path d="M347 128 L339.6 138.3 L330.7 147.2 L330.7 240 L341.4 261 L343.2 318 L359.2 346.5 L375.3 360.7 L387.7 378.5 L402 403.5 L409 421" stroke="#8d9dc2" stroke-width="2" fill="none" stroke-linejoin="round"/>
<path d="M288 270.6 L304.7 274 L321.4 271.2 L332.6 267.8 L343.7 264.5 L368 256.7" stroke="#8d9dc2" stroke-width="2" fill="none" stroke-linejoin="round"/>
<path d="M288 367.8 L316.5 357 L337.9 350 L365 323" stroke="#8d9dc2" stroke-width="2" fill="none" stroke-linejoin="round"/>
<path d="M424 98 L405.5 141.8 L398.4 154.3 L384.2 193.5 L378.8 214.8 L372 240" stroke="#8d9dc2" stroke-width="2" fill="none" stroke-linejoin="round"/>
<path d="M440 154.8 L454 173.5 L468 185.2 L484.4 199.2 L486.8 221" stroke="#8d9dc2" stroke-width="2" fill="none" stroke-linejoin="round"/>
<path d="M456.4 98 L475 136 L491.5 152.4 L500.8 164.1 L507.8 178.2 L512.5 192.2 L516 221" stroke="#8d9dc2" stroke-width="2" fill="none" stroke-linejoin="round"/>
<path d="M404 98 L434 129.75 L458.7 154.8 L475 168.8 L486.8 185.2 L496 196.9 L500 221" stroke="#8d9dc2" stroke-width="2" fill="none" stroke-linejoin="round"/>
<path d="M575.7 98 L571 131.4 L561.6 150.1 L550 168.8 L540.6 187.5 L537 221" stroke="#8d9dc2" stroke-width="2" fill="none" stroke-linejoin="round"/>
<path d="M440 188.7 L486.8 189.9 L533.6 188.7 L571 187.5 L600 185.2" stroke="#8d9dc2" stroke-width="2" fill="none" stroke-linejoin="round"/>
<path d="M645.5 117 L631.3 133 L610 161.4 L588.5 186.3 L570.7 200.6 L553 214.8 L538.7 229" stroke="#8d9dc2" stroke-width="2" fill="none" stroke-linejoin="round"/>
<path d="M631 133 L650 116 L660 104" stroke="#8d9dc2" stroke-width="2" fill="none" stroke-linejoin="round"/>
<path d="M528 214.8 L634.8 211.3 L677.6 206 L741.7 202.4 L762 200.6" stroke="#8d9dc2" stroke-width="2" fill="none" stroke-linejoin="round"/>
<path d="M560 223.2 L659.7 218.7 L762 210" stroke="#8d9dc2" stroke-width="2" fill="none" stroke-linejoin="round"/>
<path d="M688.3 98 L716.7 172 L725.6 200.6 L720.3 225.5 L716.7 268 L711.5 315" stroke="#8d9dc2" stroke-width="2" fill="none" stroke-linejoin="round"/>
<path d="M762 154.3 L699 190 L677.6 206" stroke="#8d9dc2" stroke-width="2" fill="none" stroke-linejoin="round"/>
<path d="M574.3 98 L538.7 161.4 L528 179" stroke="#8d9dc2" stroke-width="2" fill="none" stroke-linejoin="round"/>
<path d="M441 367.8 L437.6 389.2 L430.4 421" stroke="#8d9dc2" stroke-width="2" fill="none" stroke-linejoin="round"/>
<path d="M503 421 L503 394 L527.7 365.3 L554.8 350 L572 336" stroke="#8d9dc2" stroke-width="2" fill="none" stroke-linejoin="round"/>
<path d="M571 334 L640 316 L682 321 L710 330 L762 325" stroke="#8d9dc2" stroke-width="2" fill="none" stroke-linejoin="round"/>
<path d="M710 330 L740 314 L762 300" stroke="#8d9dc2" stroke-width="2" fill="none" stroke-linejoin="round"/>
<path d="M480.3 372 L480.3 421" stroke="#8d9dc2" stroke-width="2" fill="none" stroke-linejoin="round"/>
<path d="M496.4 378 L496.4 421" stroke="#8d9dc2" stroke-width="2" fill="none" stroke-linejoin="round"/>
<path d="M460 380 L470 395 L475 421" stroke="#8d9dc2" stroke-width="2" fill="none" stroke-linejoin="round"/>
<path d="M452 372 L466 380 L480 376" stroke="#8d9dc2" stroke-width="2" fill="none" stroke-linejoin="round"/>
<path d="M704 250 L704 300 L700 330" stroke="#8d9dc2" stroke-width="2" fill="none" stroke-linejoin="round"/>
<path d="M288 158.7 L323.6 161.4 L346.7 165 L377 168.5 L408 171.2 L448 175" stroke="#4a4a4a" stroke-width="0.85" stroke-dasharray="3 1.8" fill="none"/>
<path d="M357.4 138.3 L380.6 143.6 L408 150.7 L430 150" stroke="#4a4a4a" stroke-width="0.85" stroke-dasharray="3 1.8" fill="none"/>
<path d="M394.8 130 L384 172 L377 200.6 L372 221" stroke="#4a4a4a" stroke-width="0.85" stroke-dasharray="3 1.8" fill="none"/>
<path d="M288 214.8 L359 193.5 L423 197 L473 204 L494.5 209.5 L528 214.8" stroke="#4a4a4a" stroke-width="0.85" stroke-dasharray="3 1.8" fill="none"/>
<path d="M486.8 98 L496 131.4 L498.5 154.8 L500.8 178.2 L498.5 221" stroke="#4a4a4a" stroke-width="0.85" stroke-dasharray="3 1.8" fill="none"/>
<path d="M528.9 98 L526.5 136 L517.2 150.1 L514.9 164.1 L519.5 178.2 L528.9 185.2 L540 200" stroke="#4a4a4a" stroke-width="0.85" stroke-dasharray="3 1.8" fill="none"/>
<path d="M550 98 L538 126.7 L524.2 138.4 L500 150" stroke="#4a4a4a" stroke-width="0.85" stroke-dasharray="3 1.8" fill="none"/>
<path d="M600 143 L561.6 143 L533.6 138.4" stroke="#4a4a4a" stroke-width="0.85" stroke-dasharray="3 1.8" fill="none"/>
<path d="M440 200.4 L486.8 199.2 L533.6 194.5 L600 201.6" stroke="#4a4a4a" stroke-width="0.85" stroke-dasharray="3 1.8" fill="none"/>
<path d="M288 275 L304.7 277.3 L321.4 273.4 L334.8 269.5 L365 262" stroke="#4a4a4a" stroke-width="0.85" stroke-dasharray="3 1.8" fill="none"/>
<path d="M288 313.4 L340.4 294.5 L368 276.7" stroke="#4a4a4a" stroke-width="0.85" stroke-dasharray="3 1.8" fill="none"/>
<path d="M323.7 267.8 L328 282.3 L332.6 300" stroke="#4a4a4a" stroke-width="0.85" stroke-dasharray="3 1.8" fill="none"/>
<path d="M310.3 281.2 L310.3 292.3 L317 304.5 L314.7 322.3" stroke="#4a4a4a" stroke-width="0.85" stroke-dasharray="3 1.8" fill="none"/>
<path d="M330.3 324.5 L342.6 320 L356 324.5" stroke="#4a4a4a" stroke-width="0.85" stroke-dasharray="3 1.8" fill="none"/>
<path d="M298.7 387.4 L359.2 403.5 L420 404" stroke="#4a4a4a" stroke-width="0.85" stroke-dasharray="3 1.8" fill="none"/>
<path d="M352 416 L437.6 378.5 L466 375" stroke="#4a4a4a" stroke-width="0.85" stroke-dasharray="3 1.8" fill="none"/>
<path d="M288 245 L320 258 L340 266" stroke="#4a4a4a" stroke-width="0.85" stroke-dasharray="3 1.8" fill="none"/>
<path d="M620 215 L660 190 L678.4 170.5 L710 145.6 L762 125" stroke="#4a4a4a" stroke-width="0.85" stroke-dasharray="3 1.8" fill="none"/>
<path d="M676.8 98 L665.9 126.8 L645.6 131.5 L637.8 139.3" stroke="#4a4a4a" stroke-width="0.85" stroke-dasharray="3 1.8" fill="none"/>
<path d="M689 98 L703 131.5 L703 141" stroke="#4a4a4a" stroke-width="0.85" stroke-dasharray="3 1.8" fill="none"/>
<path d="M560 272 L600 276 L660 280 L700 282 L762 270" stroke="#4a4a4a" stroke-width="0.85" stroke-dasharray="3 1.8" fill="none"/>
<path d="M570 231 L640 229" stroke="#4a4a4a" stroke-width="0.85" stroke-dasharray="3 1.8" fill="none"/>
<path d="M570 243 L605 243 L625 241" stroke="#4a4a4a" stroke-width="0.85" stroke-dasharray="3 1.8" fill="none"/>
<path d="M640 229 L700 248 L762 240" stroke="#4a4a4a" stroke-width="0.85" stroke-dasharray="3 1.8" fill="none"/>
<path d="M700 335 L745 318 L762 305" stroke="#4a4a4a" stroke-width="0.85" stroke-dasharray="3 1.8" fill="none"/>
<path d="M575 108 L600 125 L625 135" stroke="#4a4a4a" stroke-width="0.85" stroke-dasharray="3 1.8" fill="none"/>
<text x="316.5" y="182.5" font-family="Liberation Sans" font-size="10.4" fill="#2a2a2a" font-weight="normal" textLength="56.9" lengthAdjust="spacing" stroke="#fff" stroke-width="2.4" stroke-linejoin="round" paint-order="stroke">Nakano City</text>
<text x="316.5" y="182.5" font-family="Liberation Sans" font-size="10.4" fill="#2a2a2a" font-weight="normal" textLength="56.9" lengthAdjust="spacing" stroke="#2a2a2a" stroke-width="0.05">Nakano City</text>
<text x="330" y="192.4" font-family="Liberation Sans" font-size="10.4" fill="#2a2a2a" font-weight="normal" textLength="29.3" lengthAdjust="spacing" stroke="#fff" stroke-width="2.4" stroke-linejoin="round" paint-order="stroke">中野区</text>
<text x="330" y="192.4" font-family="Liberation Sans" font-size="10.4" fill="#2a2a2a" font-weight="normal" textLength="29.3" lengthAdjust="spacing" stroke="#2a2a2a" stroke-width="0.05">中野区</text>
<text x="393.3" y="203.1" font-family="Liberation Sans" font-size="10.4" fill="#2a2a2a" font-weight="normal" textLength="60.5" lengthAdjust="spacing" stroke="#fff" stroke-width="2.4" stroke-linejoin="round" paint-order="stroke">Shinjuku City</text>
<text x="393.3" y="203.1" font-family="Liberation Sans" font-size="10.4" fill="#2a2a2a" font-weight="normal" textLength="60.5" lengthAdjust="spacing" stroke="#2a2a2a" stroke-width="0.05">Shinjuku City</text>
<text x="408.4" y="213.5" font-family="Liberation Sans" font-size="10.4" fill="#2a2a2a" font-weight="normal" textLength="30.9" lengthAdjust="spacing" stroke="#fff" stroke-width="2.4" stroke-linejoin="round" paint-order="stroke">新宿区</text>
<text x="408.4" y="213.5" font-family="Liberation Sans" font-size="10.4" fill="#2a2a2a" font-weight="normal" textLength="30.9" lengthAdjust="spacing" stroke="#2a2a2a" stroke-width="0.05">新宿区</text>
<text x="399.2" y="155.9" font-family="Liberation Sans" font-size="7.6" fill="#2a2a2a" font-weight="normal" textLength="33.4" lengthAdjust="spacing" stroke="#fff" stroke-width="2.4" stroke-linejoin="round" paint-order="stroke">Ikebukuro</text>
<text x="399.2" y="155.9" font-family="Liberation Sans" font-size="7.6" fill="#2a2a2a" font-weight="normal" textLength="33.4" lengthAdjust="spacing" stroke="#2a2a2a" stroke-width="0.05">Ikebukuro</text>
<text x="400" y="162.5" font-family="Liberation Sans" font-size="6.5" fill="#2a2a2a" font-weight="normal" letter-spacing="0.35" stroke="#fff" stroke-width="2.4" stroke-linejoin="round" paint-order="stroke">池袋</text>
<text x="400" y="162.5" font-family="Liberation Sans" font-size="6.5" fill="#2a2a2a" font-weight="normal" letter-spacing="0.35" stroke="#2a2a2a" stroke-width="0.05">池袋</text>
<text x="275.8" y="212.2" font-family="Liberation Sans" font-size="10.4" fill="#2a2a2a" font-weight="normal" textLength="37.8" lengthAdjust="spacing" stroke="#fff" stroke-width="2.4" stroke-linejoin="round" paint-order="stroke">ami City</text>
<text x="275.8" y="212.2" font-family="Liberation Sans" font-size="10.4" fill="#2a2a2a" font-weight="normal" textLength="37.8" lengthAdjust="spacing" stroke="#2a2a2a" stroke-width="0.05">ami City</text>
<text x="288" y="222" font-family="Liberation Sans" font-size="10.4" fill="#2a2a2a" font-weight="normal" letter-spacing="0.35" stroke="#fff" stroke-width="2.4" stroke-linejoin="round" paint-order="stroke">区</text>
<text x="288" y="222" font-family="Liberation Sans" font-size="10.4" fill="#2a2a2a" font-weight="normal" letter-spacing="0.35" stroke="#2a2a2a" stroke-width="0.05">区</text>
<text x="577.8" y="179.6" font-family="Liberation Sans" font-size="10.4" fill="#2a2a2a" font-weight="normal" textLength="56.1" lengthAdjust="spacing" stroke="#fff" stroke-width="2.4" stroke-linejoin="round" paint-order="stroke">Sumida City</text>
<text x="577.8" y="179.6" font-family="Liberation Sans" font-size="10.4" fill="#2a2a2a" font-weight="normal" textLength="56.1" lengthAdjust="spacing" stroke="#2a2a2a" stroke-width="0.05">Sumida City</text>
<text x="590.3" y="190.6" font-family="Liberation Sans" font-size="10.4" fill="#2a2a2a" font-weight="normal" textLength="31.1" lengthAdjust="spacing" stroke="#fff" stroke-width="2.4" stroke-linejoin="round" paint-order="stroke">墨田区</text>
<text x="590.3" y="190.6" font-family="Liberation Sans" font-size="10.4" fill="#2a2a2a" font-weight="normal" textLength="31.1" lengthAdjust="spacing" stroke="#2a2a2a" stroke-width="0.05">墨田区</text>
<text x="676.7" y="222.8" font-family="Liberation Sans" font-size="10.4" fill="#2a2a2a" font-weight="normal" textLength="63.1" lengthAdjust="spacing" stroke="#fff" stroke-width="2.4" stroke-linejoin="round" paint-order="stroke">Edogawa City</text>
<text x="676.7" y="222.8" font-family="Liberation Sans" font-size="10.4" fill="#2a2a2a" font-weight="normal" textLength="63.1" lengthAdjust="spacing" stroke="#2a2a2a" stroke-width="0.05">Edogawa City</text>
<text x="687" y="232.8" font-family="Liberation Sans" font-size="10.4" fill="#2a2a2a" font-weight="normal" textLength="41.0" lengthAdjust="spacing" stroke="#fff" stroke-width="2.4" stroke-linejoin="round" paint-order="stroke">江戸川区</text>
<text x="687" y="232.8" font-family="Liberation Sans" font-size="10.4" fill="#2a2a2a" font-weight="normal" textLength="41.0" lengthAdjust="spacing" stroke="#2a2a2a" stroke-width="0.05">江戸川区</text>
<text x="584" y="308.6" font-family="Liberation Sans" font-size="10.4" fill="#2a2a2a" font-weight="normal" textLength="42.0" lengthAdjust="spacing" stroke="#fff" stroke-width="2.4" stroke-linejoin="round" paint-order="stroke">Koto City</text>
<text x="584" y="308.6" font-family="Liberation Sans" font-size="10.4" fill="#2a2a2a" font-weight="normal" textLength="42.0" lengthAdjust="spacing" stroke="#2a2a2a" stroke-width="0.05">Koto City</text>
<text x="594" y="319" font-family="Liberation Sans" font-size="10.4" fill="#2a2a2a" font-weight="normal" textLength="31.0" lengthAdjust="spacing" stroke="#fff" stroke-width="2.4" stroke-linejoin="round" paint-order="stroke">江東区</text>
<text x="594" y="319" font-family="Liberation Sans" font-size="10.4" fill="#2a2a2a" font-weight="normal" textLength="31.0" lengthAdjust="spacing" stroke="#2a2a2a" stroke-width="0.05">江東区</text>
<text x="286" y="332.3" font-family="Liberation Sans" font-size="10.4" fill="#2a2a2a" font-weight="normal" textLength="44.0" lengthAdjust="spacing" stroke="#fff" stroke-width="2.4" stroke-linejoin="round" paint-order="stroke">gaya City</text>
<text x="286" y="332.3" font-family="Liberation Sans" font-size="10.4" fill="#2a2a2a" font-weight="normal" textLength="44.0" lengthAdjust="spacing" stroke="#2a2a2a" stroke-width="0.05">gaya City</text>
<text x="287" y="342.5" font-family="Liberation Sans" font-size="10.4" fill="#2a2a2a" font-weight="normal" textLength="31.0" lengthAdjust="spacing" stroke="#fff" stroke-width="2.4" stroke-linejoin="round" paint-order="stroke">世田谷区</text>
<text x="287" y="342.5" font-family="Liberation Sans" font-size="10.4" fill="#2a2a2a" font-weight="normal" textLength="31.0" lengthAdjust="spacing" stroke="#2a2a2a" stroke-width="0.05">世田谷区</text>
<text x="361" y="352.2" font-family="Liberation Sans" font-size="10.4" fill="#2a2a2a" font-weight="normal" textLength="55.7" lengthAdjust="spacing" stroke="#fff" stroke-width="2.4" stroke-linejoin="round" paint-order="stroke">Meguro City</text>
<text x="361" y="352.2" font-family="Liberation Sans" font-size="10.4" fill="#2a2a2a" font-weight="normal" textLength="55.7" lengthAdjust="spacing" stroke="#2a2a2a" stroke-width="0.05">Meguro City</text>
<text x="375" y="363.3" font-family="Liberation Sans" font-size="10.4" fill="#2a2a2a" font-weight="normal" textLength="28.0" lengthAdjust="spacing" stroke="#fff" stroke-width="2.4" stroke-linejoin="round" paint-order="stroke">目黒区</text>
<text x="375" y="363.3" font-family="Liberation Sans" font-size="10.4" fill="#2a2a2a" font-weight="normal" textLength="28.0" lengthAdjust="spacing" stroke="#2a2a2a" stroke-width="0.05">目黒区</text>
<text x="636.2" y="170.7" font-family="Liberation Sans" font-size="7.6" fill="#2a2a2a" font-weight="normal" textLength="37.8" lengthAdjust="spacing" stroke="#fff" stroke-width="2.4" stroke-linejoin="round" paint-order="stroke">Shin-Koiwa</text>
<text x="636.2" y="170.7" font-family="Liberation Sans" font-size="7.6" fill="#2a2a2a" font-weight="normal" textLength="37.8" lengthAdjust="spacing" stroke="#2a2a2a" stroke-width="0.05">Shin-Koiwa</text>
<text x="728" y="145.4" font-family="Liberation Sans" font-size="7.6" fill="#2a2a2a" font-weight="normal" textLength="31.0" lengthAdjust="spacing" stroke="#fff" stroke-width="2.4" stroke-linejoin="round" paint-order="stroke">Ichikawa</text>
<text x="728" y="145.4" font-family="Liberation Sans" font-size="7.6" fill="#2a2a2a" font-weight="normal" textLength="31.0" lengthAdjust="spacing" stroke="#2a2a2a" stroke-width="0.05">Ichikawa</text>
<text x="721.5" y="183.3" font-family="Liberation Sans" font-size="7.6" fill="#2e8a5a" font-weight="normal" textLength="43.5" lengthAdjust="spacing" stroke="#fff" stroke-width="2.4" stroke-linejoin="round" paint-order="stroke">Shinozeki P</text>
<text x="721.5" y="183.3" font-family="Liberation Sans" font-size="7.6" fill="#2e8a5a" font-weight="normal" textLength="43.5" lengthAdjust="spacing" stroke="#2e8a5a" stroke-width="0.05">Shinozeki P</text>
<text x="516" y="177" font-family="Liberation Sans" font-size="8" fill="#2e8a5a" font-weight="normal" textLength="37.5" lengthAdjust="spacing" stroke="#fff" stroke-width="2.4" stroke-linejoin="round" paint-order="stroke">Ueno Park</text>
<text x="516" y="177" font-family="Liberation Sans" font-size="8" fill="#2e8a5a" font-weight="normal" textLength="37.5" lengthAdjust="spacing" stroke="#2e8a5a" stroke-width="0.05">Ueno Park</text>
<text x="517" y="184.5" font-family="Liberation Sans" font-size="6.3" fill="#2e8a5a" font-weight="normal" textLength="35.0" lengthAdjust="spacing" stroke="#fff" stroke-width="2.4" stroke-linejoin="round" paint-order="stroke">上野恩賜公園</text>
<text x="517" y="184.5" font-family="Liberation Sans" font-size="6.3" fill="#2e8a5a" font-weight="normal" textLength="35.0" lengthAdjust="spacing" stroke="#2e8a5a" stroke-width="0.05">上野恩賜公園</text>
<text x="505" y="215.5" font-family="Liberation Sans" font-size="6.3" fill="#2a2a2a" font-weight="normal" textLength="15.0" lengthAdjust="spacing" stroke="#fff" stroke-width="2.4" stroke-linejoin="round" paint-order="stroke">秋葉原</text>
<text x="505" y="215.5" font-family="Liberation Sans" font-size="6.3" fill="#2a2a2a" font-weight="normal" textLength="15.0" lengthAdjust="spacing" stroke="#2a2a2a" stroke-width="0.05">秋葉原</text>
<text x="680" y="289" font-family="Liberation Sans" font-size="6.3" fill="#2a2a2a" font-weight="normal" textLength="12.0" lengthAdjust="spacing" stroke="#fff" stroke-width="2.4" stroke-linejoin="round" paint-order="stroke">葛西</text>
<text x="680" y="289" font-family="Liberation Sans" font-size="6.3" fill="#2a2a2a" font-weight="normal" textLength="12.0" lengthAdjust="spacing" stroke="#2a2a2a" stroke-width="0.05">葛西</text>
<text x="730" y="190.5" font-family="Liberation Sans" font-size="6.3" fill="#2e8a5a" font-weight="normal" textLength="28.0" lengthAdjust="spacing" stroke="#fff" stroke-width="2.4" stroke-linejoin="round" paint-order="stroke">篠崎公園</text>
<text x="730" y="190.5" font-family="Liberation Sans" font-size="6.3" fill="#2e8a5a" font-weight="normal" textLength="28.0" lengthAdjust="spacing" stroke="#2e8a5a" stroke-width="0.05">篠崎公園</text>
<text x="648" y="177.5" font-family="Liberation Sans" font-size="6.3" fill="#2a2a2a" font-weight="normal" textLength="14.0" lengthAdjust="spacing" stroke="#fff" stroke-width="2.4" stroke-linejoin="round" paint-order="stroke">新小岩</text>
<text x="648" y="177.5" font-family="Liberation Sans" font-size="6.3" fill="#2a2a2a" font-weight="normal" textLength="14.0" lengthAdjust="spacing" stroke="#2a2a2a" stroke-width="0.05">新小岩</text>
<text x="746" y="152" font-family="Liberation Sans" font-size="6.3" fill="#2a2a2a" font-weight="normal" textLength="12.0" lengthAdjust="spacing" stroke="#fff" stroke-width="2.4" stroke-linejoin="round" paint-order="stroke">市川</text>
<text x="746" y="152" font-family="Liberation Sans" font-size="6.3" fill="#2a2a2a" font-weight="normal" textLength="12.0" lengthAdjust="spacing" stroke="#2a2a2a" stroke-width="0.05">市川</text>
<text x="744" y="317.5" font-family="Liberation Sans" font-size="6.3" fill="#2a2a2a" font-weight="normal" textLength="18.0" lengthAdjust="spacing" stroke="#fff" stroke-width="2.4" stroke-linejoin="round" paint-order="stroke">新浦安</text>
<text x="744" y="317.5" font-family="Liberation Sans" font-size="6.3" fill="#2a2a2a" font-weight="normal" textLength="18.0" lengthAdjust="spacing" stroke="#2a2a2a" stroke-width="0.05">新浦安</text>
<text x="620" y="358.5" font-family="Liberation Sans" font-size="6.3" fill="#2e8a5a" font-weight="normal" textLength="32.0" lengthAdjust="spacing" stroke="#fff" stroke-width="2.4" stroke-linejoin="round" paint-order="stroke">若洲海浜公園</text>
<text x="620" y="358.5" font-family="Liberation Sans" font-size="6.3" fill="#2e8a5a" font-weight="normal" textLength="32.0" lengthAdjust="spacing" stroke="#2e8a5a" stroke-width="0.05">若洲海浜公園</text>
<text x="571.5" y="258" font-family="Liberation Sans" font-size="7.5" fill="#555" font-weight="normal" letter-spacing="0.35" stroke="#fff" stroke-width="2.4" stroke-linejoin="round" paint-order="stroke">303</text>
<text x="571.5" y="258" font-family="Liberation Sans" font-size="7.5" fill="#555" font-weight="normal" letter-spacing="0.35" stroke="#555" stroke-width="0.05">303</text>
<text x="495" y="208.7" font-family="Liberation Sans" font-size="7.6" fill="#2a2a2a" font-weight="normal" textLength="34.0" lengthAdjust="spacing" stroke="#fff" stroke-width="2.4" stroke-linejoin="round" paint-order="stroke">Akihabara</text>
<text x="495" y="208.7" font-family="Liberation Sans" font-size="7.6" fill="#2a2a2a" font-weight="normal" textLength="34.0" lengthAdjust="spacing" stroke="#2a2a2a" stroke-width="0.05">Akihabara</text>
<text x="331" y="248.6" font-family="Liberation Sans" font-size="7.6" fill="#2a2a2a" font-weight="normal" textLength="34.0" lengthAdjust="spacing" stroke="#fff" stroke-width="2.4" stroke-linejoin="round" paint-order="stroke">Sasazuka</text>
<text x="331" y="248.6" font-family="Liberation Sans" font-size="7.6" fill="#2a2a2a" font-weight="normal" textLength="34.0" lengthAdjust="spacing" stroke="#2a2a2a" stroke-width="0.05">Sasazuka</text>
<text x="291.5" y="287.2" font-family="Liberation Sans" font-size="7.6" fill="#2a2a2a" font-weight="normal" textLength="55.0" lengthAdjust="spacing" stroke="#fff" stroke-width="2.4" stroke-linejoin="round" paint-order="stroke">Shimo-Kitazawa</text>
<text x="291.5" y="287.2" font-family="Liberation Sans" font-size="7.6" fill="#2a2a2a" font-weight="normal" textLength="55.0" lengthAdjust="spacing" stroke="#2a2a2a" stroke-width="0.05">Shimo-Kitazawa</text>
<text x="681.7" y="282" font-family="Liberation Sans" font-size="7.6" fill="#2a2a2a" font-weight="normal" textLength="17.7" lengthAdjust="spacing" stroke="#fff" stroke-width="2.4" stroke-linejoin="round" paint-order="stroke">Kasai</text>
<text x="681.7" y="282" font-family="Liberation Sans" font-size="7.6" fill="#2a2a2a" font-weight="normal" textLength="17.7" lengthAdjust="spacing" stroke="#2a2a2a" stroke-width="0.05">Kasai</text>
<text x="721.6" y="311" font-family="Liberation Sans" font-size="7.6" fill="#2a2a2a" font-weight="normal" textLength="46.4" lengthAdjust="spacing" stroke="#fff" stroke-width="2.4" stroke-linejoin="round" paint-order="stroke">Shin-Urayasu</text>
<text x="721.6" y="311" font-family="Liberation Sans" font-size="7.6" fill="#2a2a2a" font-weight="normal" textLength="46.4" lengthAdjust="spacing" stroke="#2a2a2a" stroke-width="0.05">Shin-Urayasu</text>
<text x="687" y="340.2" font-family="Liberation Sans" font-size="7.6" fill="#2a2a2a" font-weight="normal" textLength="30.6" lengthAdjust="spacing" stroke="#fff" stroke-width="2.4" stroke-linejoin="round" paint-order="stroke">Maihama</text>
<text x="687" y="340.2" font-family="Liberation Sans" font-size="7.6" fill="#2a2a2a" font-weight="normal" textLength="30.6" lengthAdjust="spacing" stroke="#2a2a2a" stroke-width="0.05">Maihama</text>
<text x="624" y="343.2" font-family="Liberation Sans" font-size="7.6" fill="#2e8a5a" font-weight="normal" textLength="27.7" lengthAdjust="spacing" stroke="#fff" stroke-width="2.4" stroke-linejoin="round" paint-order="stroke">Wakasu</text>
<text x="624" y="343.2" font-family="Liberation Sans" font-size="7.6" fill="#2e8a5a" font-weight="normal" textLength="27.7" lengthAdjust="spacing" stroke="#2e8a5a" stroke-width="0.05">Wakasu</text>
<text x="615" y="351.7" font-family="Liberation Sans" font-size="7.6" fill="#2e8a5a" font-weight="normal" textLength="46.5" lengthAdjust="spacing" stroke="#fff" stroke-width="2.4" stroke-linejoin="round" paint-order="stroke">Seaside Park</text>
<text x="615" y="351.7" font-family="Liberation Sans" font-size="7.6" fill="#2e8a5a" font-weight="normal" textLength="46.5" lengthAdjust="spacing" stroke="#2e8a5a" stroke-width="0.05">Seaside Park</text>
<text x="548" y="406" font-family="Liberation Sans" font-size="7.6" fill="#2e8a5a" font-weight="normal" textLength="30.0" lengthAdjust="spacing" stroke="#fff" stroke-width="2.4" stroke-linejoin="round" paint-order="stroke">Akatsuki</text>
<text x="548" y="406" font-family="Liberation Sans" font-size="7.6" fill="#2e8a5a" font-weight="normal" textLength="30.0" lengthAdjust="spacing" stroke="#2e8a5a" stroke-width="0.05">Akatsuki</text>
<rect x="340.6" y="153.0" width="14" height="8" rx="2.5" fill="#3a6fd8" stroke="#fff" stroke-width="0.8"/>
<text x="347.6" y="159.3" font-family="Liberation Sans" font-size="6" fill="#fff" text-anchor="middle">430</text>
<rect x="340.6" y="201.0" width="14" height="8" rx="2.5" fill="#3a6fd8" stroke="#fff" stroke-width="0.8"/>
<text x="347.6" y="207.3" font-family="Liberation Sans" font-size="6" fill="#fff" text-anchor="middle">433</text>
<rect x="348.8" y="217.7" width="14" height="8" rx="2.5" fill="#3a6fd8" stroke="#fff" stroke-width="0.8"/>
<text x="355.8" y="224.0" font-family="Liberation Sans" font-size="6" fill="#fff" text-anchor="middle">420</text>
<rect x="325.4" y="227.0" width="14" height="8" rx="2.5" fill="#3a6fd8" stroke="#fff" stroke-width="0.8"/>
<text x="332.4" y="233.3" font-family="Liberation Sans" font-size="6" fill="#fff" text-anchor="middle">318</text>
<rect x="350.3" y="231.7" width="11" height="8" rx="2.5" fill="#3a6fd8" stroke="#fff" stroke-width="0.8"/>
<text x="355.8" y="238.0" font-family="Liberation Sans" font-size="6" fill="#fff" text-anchor="middle">14</text>
<rect x="338.0" y="384.0" width="14" height="8" rx="2.5" fill="#3a6fd8" stroke="#fff" stroke-width="0.8"/>
<text x="345" y="390.3" font-family="Liberation Sans" font-size="6" fill="#fff" text-anchor="middle">313</text>
<rect x="381.0" y="386.4" width="14" height="8" rx="2.5" fill="#3a6fd8" stroke="#fff" stroke-width="0.8"/>
<text x="388" y="392.7" font-family="Liberation Sans" font-size="6" fill="#fff" text-anchor="middle">318</text>
<rect x="429.5" y="392.6" width="9" height="8" rx="2.5" fill="#3a6fd8" stroke="#fff" stroke-width="0.8"/>
<text x="434" y="398.9" font-family="Liberation Sans" font-size="6" fill="#fff" text-anchor="middle">1</text>
<rect x="628.0" y="110.5" width="14" height="8" rx="2.5" fill="#3a6fd8" stroke="#fff" stroke-width="0.8"/>
<text x="635" y="116.8" font-family="Liberation Sans" font-size="6" fill="#fff" text-anchor="middle">313</text>
<rect x="603.5" y="157.8" width="9" height="8" rx="2.5" fill="#3a6fd8" stroke="#fff" stroke-width="0.8"/>
<text x="608" y="164.1" font-family="Liberation Sans" font-size="6" fill="#fff" text-anchor="middle">6</text>
<rect x="614.0" y="198.7" width="14" height="8" rx="2.5" fill="#3a6fd8" stroke="#fff" stroke-width="0.8"/>
<text x="621" y="205.0" font-family="Liberation Sans" font-size="6" fill="#fff" text-anchor="middle">315</text>
<rect x="635.3" y="225.0" width="11" height="8" rx="2.5" fill="#3a6fd8" stroke="#fff" stroke-width="0.8"/>
<text x="640.8" y="231.3" font-family="Liberation Sans" font-size="6" fill="#fff" text-anchor="middle">50</text>
<rect x="708.0" y="245.2" width="14" height="8" rx="2.5" fill="#3a6fd8" stroke="#fff" stroke-width="0.8"/>
<text x="715" y="251.5" font-family="Liberation Sans" font-size="6" fill="#fff" text-anchor="middle">318</text>
<rect x="743.5" y="251.0" width="9" height="8" rx="2.5" fill="#3a6fd8" stroke="#fff" stroke-width="0.8"/>
<text x="748" y="257.3" font-family="Liberation Sans" font-size="6" fill="#fff" text-anchor="middle">9</text>
<rect x="697.0" y="294.4" width="14" height="8" rx="2.5" fill="#3a6fd8" stroke="#fff" stroke-width="0.8"/>
<text x="704" y="300.7" font-family="Liberation Sans" font-size="6" fill="#fff" text-anchor="middle">318</text>
<rect x="741.0" y="283.0" width="14" height="8" rx="2.5" fill="#3a6fd8" stroke="#fff" stroke-width="0.8"/>
<text x="748" y="289.3" font-family="Liberation Sans" font-size="6" fill="#fff" text-anchor="middle">282</text>
<rect x="457.0" y="156.5" width="14" height="8" rx="2.5" fill="#3a6fd8" stroke="#fff" stroke-width="0.8"/>
<text x="464" y="162.8" font-family="Liberation Sans" font-size="6" fill="#fff" text-anchor="middle">254</text>
<rect x="331.0" y="262.0" width="10" height="8" rx="2.5" fill="#6aa84f" stroke="#fff" stroke-width="0.8"/>
<text x="336" y="268.3" font-family="Liberation Sans" font-size="6" fill="#fff" text-anchor="middle">4</text>
<rect x="315.0" y="351.8" width="10" height="8" rx="2.5" fill="#6aa84f" stroke="#fff" stroke-width="0.8"/>
<text x="320" y="358.1" font-family="Liberation Sans" font-size="6" fill="#fff" text-anchor="middle">3</text>
<rect x="626.6" y="129.7" width="10" height="8" rx="2.5" fill="#6aa84f" stroke="#fff" stroke-width="0.8"/>
<text x="631.6" y="136.0" font-family="Liberation Sans" font-size="6" fill="#fff" text-anchor="middle">C2</text>
<rect x="613.0" y="216.0" width="10" height="8" rx="2.5" fill="#6aa84f" stroke="#fff" stroke-width="0.8"/>
<text x="618" y="222.3" font-family="Liberation Sans" font-size="6" fill="#fff" text-anchor="middle">7</text>
<rect x="582.8" y="271.2" width="10" height="8" rx="2.5" fill="#6aa84f" stroke="#fff" stroke-width="0.8"/>
<text x="587.8" y="277.5" font-family="Liberation Sans" font-size="6" fill="#fff" text-anchor="middle">6</text>
<rect x="567.0" y="326.0" width="10" height="8" rx="2.5" fill="#6aa84f" stroke="#fff" stroke-width="0.8"/>
<text x="572" y="332.3" font-family="Liberation Sans" font-size="6" fill="#fff" text-anchor="middle">B</text>
<rect x="431.0" y="130.0" width="10" height="8" rx="2.5" fill="#6aa84f" stroke="#fff" stroke-width="0.8"/>
<text x="436" y="136.3" font-family="Liberation Sans" font-size="6" fill="#fff" text-anchor="middle">5</text>
<rect x="447.0" y="106.0" width="10" height="8" rx="2.5" fill="#6aa84f" stroke="#fff" stroke-width="0.8"/>
<text x="452" y="112.3" font-family="Liberation Sans" font-size="6" fill="#fff" text-anchor="middle">5</text>
<circle cx="747" cy="164" r="5.5" fill="#2f9e66" stroke="#fff" stroke-width="1"/>
<path d="M747 161L744.5 165.5H749.5Z" fill="#fff"/>
<circle cx="638.3" cy="367" r="5.5" fill="#2f9e66" stroke="#fff" stroke-width="1"/>
<path d="M638.3 364L635.8 368.5H640.8Z" fill="#fff"/>
<circle cx="546" cy="377" r="5.5" fill="#2f9e66" stroke="#fff" stroke-width="1"/>
<path d="M546 374L543.5 378.5H548.5Z" fill="#fff"/>
<defs><linearGradient id="topfade" x1="0" y1="0" x2="0" y2="1"><stop offset="0" stop-color="#fff" stop-opacity="0.92"/><stop offset="1" stop-color="#fff" stop-opacity="0"/></linearGradient></defs>
<rect x="288" y="102" width="474" height="7" fill="url(#topfade)"/>
<defs><filter id="sh" x="-20%" y="-20%" width="140%" height="160%"><feDropShadow dx="0" dy="0.6" stdDeviation="0.8" flood-color="#000" flood-opacity="0.25"/></filter></defs>
<rect x="294" y="115" width="99" height="23" fill="#fff" rx="1" filter="url(#sh)"/>
<rect x="334" y="117" width="0.8" height="19" fill="#eee"/>
<text x="304.4" y="130.3" font-family="Liberation Sans" font-size="10.3" font-weight="bold" fill="#111">Map</text>
<text x="345" y="130.3" font-family="Liberation Sans" font-size="10.4" fill="#666">Satellite</text>
<rect x="733" y="113.6" width="24.6" height="24" fill="#fff" rx="1" filter="url(#sh)"/>
<path d="M740.5 124.5V121.7H743.5M746.8 121.7H749.8V124.5M749.8 128.3V131.1H746.8M743.5 131.1H740.5V128.3" stroke="#555" stroke-width="1.3" fill="none"/>
<circle cx="745" cy="352" r="10.7" fill="#fff" filter="url(#sh)"/>
<path d="M743 347.5L745 345.5L747 347.5M743 356.5L745 358.5L747 356.5M740.5 350L738.5 352L740.5 354M749.5 350L751.5 352L749.5 354" stroke="#444" stroke-width="1.1" fill="none"/>
<rect x="733.2" y="383.4" width="23.8" height="22.6" fill="#fff" filter="url(#sh)"/>
<circle cx="745" cy="388.8" r="2.2" fill="#f5b400"/>
<path d="M742.3 391.5H747.7L748.5 397H747V402H743V397H741.5Z" fill="#f5b400"/>
<rect x="507" y="412.3" width="255" height="8.8" fill="#f5f5f5" opacity="0.82"/>
<path d="M509.5 419.3L511 415.5H514.8L513.3 419.3Z" fill="#3b5fc0"/>
<text x="516.4" y="419.2" font-family="Liberation Sans" font-size="6" fill="#222" textLength="50.7" lengthAdjust="spacingAndGlyphs">Keyboard shortcuts</text>
<text x="575" y="419.2" font-family="Liberation Sans" font-size="6" fill="#222" textLength="43.8" lengthAdjust="spacingAndGlyphs">Map data ©2025</text>
<text x="625.75" y="419.2" font-family="Liberation Sans" font-size="6" fill="#222" textLength="12.2" lengthAdjust="spacingAndGlyphs">2 km</text>
<path d="M640 415.2V417.5H679V415.2" stroke="#222" stroke-width="1.3" fill="none"/>
<rect x="683" y="413" width="0.6" height="7.5" fill="#ccc"/><rect x="706.6" y="413" width="0.6" height="7.5" fill="#ccc"/><rect x="571.3" y="413" width="0.6" height="7.5" fill="#ccc"/>
<text x="687.75" y="419.2" font-family="Liberation Sans" font-size="6" fill="#222" textLength="14.9" lengthAdjust="spacingAndGlyphs">Terms</text>
<text x="710.5" y="419.2" font-family="Liberation Sans" font-size="6" fill="#222" textLength="48.1" lengthAdjust="spacingAndGlyphs">Report a map error</text>
<text x="294" y="416.5" font-family="Liberation Sans" font-size="10" fill="#ffffff" stroke="#8fa0b8" stroke-width="1.6" paint-order="stroke" font-weight="bold" textLength="34" lengthAdjust="spacingAndGlyphs">Google</text>
</svg>
<div class="b" style="left:365px;top:221px;width:205px;height:128.5px;background:#fff;border-radius:3px;box-shadow:0 0.5px 2px rgba(0,0,0,0.22)"></div>
<svg class="b" style="left:375px;top:230.2px;border-radius:3.5px" width="57.5" height="70.4" viewBox="0 0 57.5 70.4">
<defs>
<filter id="bl" x="-30%" y="-30%" width="160%" height="160%"><feGaussianBlur stdDeviation="1.3"/></filter>
<filter id="bl2" x="-30%" y="-30%" width="160%" height="160%"><feGaussianBlur stdDeviation="0.7"/></filter>
</defs>
<rect width="57.5" height="70.4" fill="#231c12"/>
<g filter="url(#bl)">
<rect x="-4" y="-4" width="24" height="34" fill="#0c1a38"/>
<ellipse cx="8" cy="19" rx="10" ry="9" fill="#1b4070"/>
<ellipse cx="12" cy="15" rx="5" ry="4" fill="#35608f" opacity="0.8"/>
<ellipse cx="4" cy="24" rx="4" ry="3" fill="#4a74a0" opacity="0.5"/>
<rect x="18" y="-4" width="44" height="32" fill="#3e5a22"/>
<ellipse cx="28" cy="5" rx="10" ry="6" fill="#5f7e34"/>
<ellipse cx="44" cy="8" rx="12" ry="8" fill="#627f30"/>
<path d="M28 11 L57 19 L57 26 L28 17 Z" fill="#b0b850" opacity="0.75"/>
<ellipse cx="50" cy="14" rx="5" ry="3" fill="#c0c458" opacity="0.7"/>
<ellipse cx="24" cy="20" rx="6" ry="5" fill="#2c4418"/>
<rect x="-4" y="25" width="66" height="6" fill="#1c1a10"/>
</g>
<g filter="url(#bl2)">
<path d="M0 31 L57.5 29 L57.5 35 L0 37 Z" fill="#b8442a"/>
<rect x="0" y="36" width="57.5" height="15" fill="#6e2416"/>
<rect x="0" y="36" width="12" height="12" fill="#8a301c"/>
<rect x="20" y="36" width="10" height="8" fill="#9a3420"/>
<rect x="30" y="37" width="3" height="14" fill="#b85034"/>
<rect x="34" y="42" width="7" height="9" fill="#e0a890" opacity="0.75"/>
<rect x="44" y="37" width="3" height="13" fill="#a84430"/>
<ellipse cx="10" cy="46" rx="10" ry="6" fill="#2a2612"/>
<ellipse cx="52" cy="44" rx="6" ry="7" fill="#3a3a18"/>
<rect x="0" y="50" width="57.5" height="21" fill="#2e2210"/>
<path d="M4 51.5 L54 51.5 L56 55 L2 55 Z" fill="#5e4420"/>
<path d="M2 59 L56 59 L57 62 L1 62 Z" fill="#463216"/>
<rect x="0" y="64" width="57.5" height="7" fill="#24190a"/>
</g>
</svg>
<svg class="b" style="left:442px;top:229px" width="36" height="8" viewBox="442 229 36 8"><path d="M444.80 230.70 L445.38 232.10 L446.89 232.22 L445.74 233.21 L446.09 234.68 L444.80 233.89 L443.51 234.68 L443.86 233.21 L442.71 232.22 L444.22 232.10Z" fill="#1a1a1a"/><path d="M451.90 230.70 L452.48 232.10 L453.99 232.22 L452.84 233.21 L453.19 234.68 L451.90 233.89 L450.61 234.68 L450.96 233.21 L449.81 232.22 L451.32 232.10Z" fill="#1a1a1a"/><path d="M459.00 230.70 L459.58 232.10 L461.09 232.22 L459.94 233.21 L460.29 234.68 L459.00 233.89 L457.71 234.68 L458.06 233.21 L456.91 232.22 L458.42 232.10Z" fill="#1a1a1a"/><path d="M466.10 230.70 L466.68 232.10 L468.19 232.22 L467.04 233.21 L467.39 234.68 L466.10 233.89 L464.81 234.68 L465.16 233.21 L464.01 232.22 L465.52 232.10Z" fill="#1a1a1a"/><path d="M473.20 230.70 L473.78 232.10 L475.29 232.22 L474.14 233.21 L474.49 234.68 L473.20 233.89 L471.91 234.68 L472.26 233.21 L471.11 232.22 L472.62 232.10Z" fill="#1a1a1a"/></svg>
<div class="t" id="c1" style="left:442.78px;top:239.50px;font-size:10.4px;color:#151515;letter-spacing:0.175px;-webkit-text-stroke:0.45px #151515">Grand Prince Hotel</div>
<div class="t" id="c2" style="left:442.78px;top:253.66px;font-size:10.4px;color:#151515;letter-spacing:0.321px;-webkit-text-stroke:0.45px #151515">Takanawa</div>
<div class="b" style="left:442px;top:274.5px;width:14.199999999999989px;height:11.0px;background:#177a4a;border-radius:2px"></div>
<div class="t" id="c3" style="left:443.90px;top:277.12px;font-size:7.4px;color:#fff;letter-spacing:0.100px;-webkit-text-stroke:0.2px #fff">8.2</div>
<div class="t" id="c4" style="left:461.00px;top:276.90px;font-size:7.6px;color:#1d6b45;letter-spacing:0.234px">Very good</div>
<div class="t" id="c5" style="left:499.05px;top:276.33px;font-size:7.6px;color:#7a7a7a;letter-spacing:0.558px">(3266)</div>
<div class="t" id="c6" style="left:514.61px;top:317.54px;font-size:9.5px;color:#151515;font-weight:bold;letter-spacing:0.394px">$2,270.95</div>
<div class="t" id="c7" style="left:500.10px;top:331.14px;font-size:7.6px;color:#606060;letter-spacing:0.296px">1 adult / 5 nights</div>
<div class="b" style="left:478px;top:359px;width:33px;height:19px;background:#fff;border-radius:4px;box-shadow:0 0.5px 2.5px rgba(0,0,0,0.28)"></div>
<svg class="b" style="left:489px;top:377.5px" width="10" height="5" viewBox="489 377.5 10 5"><path d="M490 377.5L494 382L498 377.5Z" fill="#fff"/></svg>
<div class="t" id="p0" style="left:480.00px;top:365.44px;font-size:7.8px;color:#151515;font-weight:bold">$2,212</div>
<div class="b" style="left:433px;top:351.5px;width:30px;height:19.5px;background:#fff;border-radius:4px;box-shadow:0 0.5px 2.5px rgba(0,0,0,0.28)"></div>
<svg class="b" style="left:443px;top:370.5px" width="10" height="5" viewBox="443 370.5 10 5"><path d="M444 370.5L448 375L452 370.5Z" fill="#fff"/></svg>
<div class="t" id="p1" style="left:438.00px;top:358.66px;font-size:7.8px;color:#151515;font-weight:bold;letter-spacing:-0.648px">$5,121</div>
<div class="b" style="left:468px;top:351px;width:34px;height:22px;background:#151515;border-radius:4px;box-shadow:0 0.5px 2.5px rgba(0,0,0,0.28)"></div>
<svg class="b" style="left:479px;top:372.5px" width="10" height="6" viewBox="479 372.5 10 6"><path d="M480 372.5L484 378L488 372.5Z" fill="#151515"/></svg>
<div class="t" id="p2" style="left:471.86px;top:357.78px;font-size:9px;color:#fff;font-weight:bold;letter-spacing:-0.324px">$2,271</div>
<div class="b" style="left:529px;top:362px;width:37px;height:22.5px;background:#fff;border-radius:4px;box-shadow:0 0.5px 2.5px rgba(0,0,0,0.28)"></div>
<svg class="b" style="left:541px;top:384.0px" width="10" height="4.5" viewBox="541 384.0 10 4.5"><path d="M542 384.0L546 388L550 384.0Z" fill="#fff"/></svg>
<div class="t" id="p3" style="left:536.00px;top:371.52px;font-size:8.5px;color:#151515;font-weight:bold;letter-spacing:-0.432px">$2,585</div>
<div class="b" style="left:711.4px;top:360px;width:29.300000000000068px;height:21.399999999999977px;background:#fff;border-radius:4px;box-shadow:0 0.5px 2.5px rgba(0,0,0,0.28)"></div>
<svg class="b" style="left:720.4px;top:380.9px" width="10" height="4.300000000000011" viewBox="720.4 380.9 10 4.300000000000011"><path d="M721.4 380.9L725.4 384.7L729.4 380.9Z" fill="#fff"/></svg>
<div class="t" id="p4" style="left:716.00px;top:367.06px;font-size:8px;color:#151515;font-weight:bold;letter-spacing:-0.900px">$1,716</div>
</body></html>
